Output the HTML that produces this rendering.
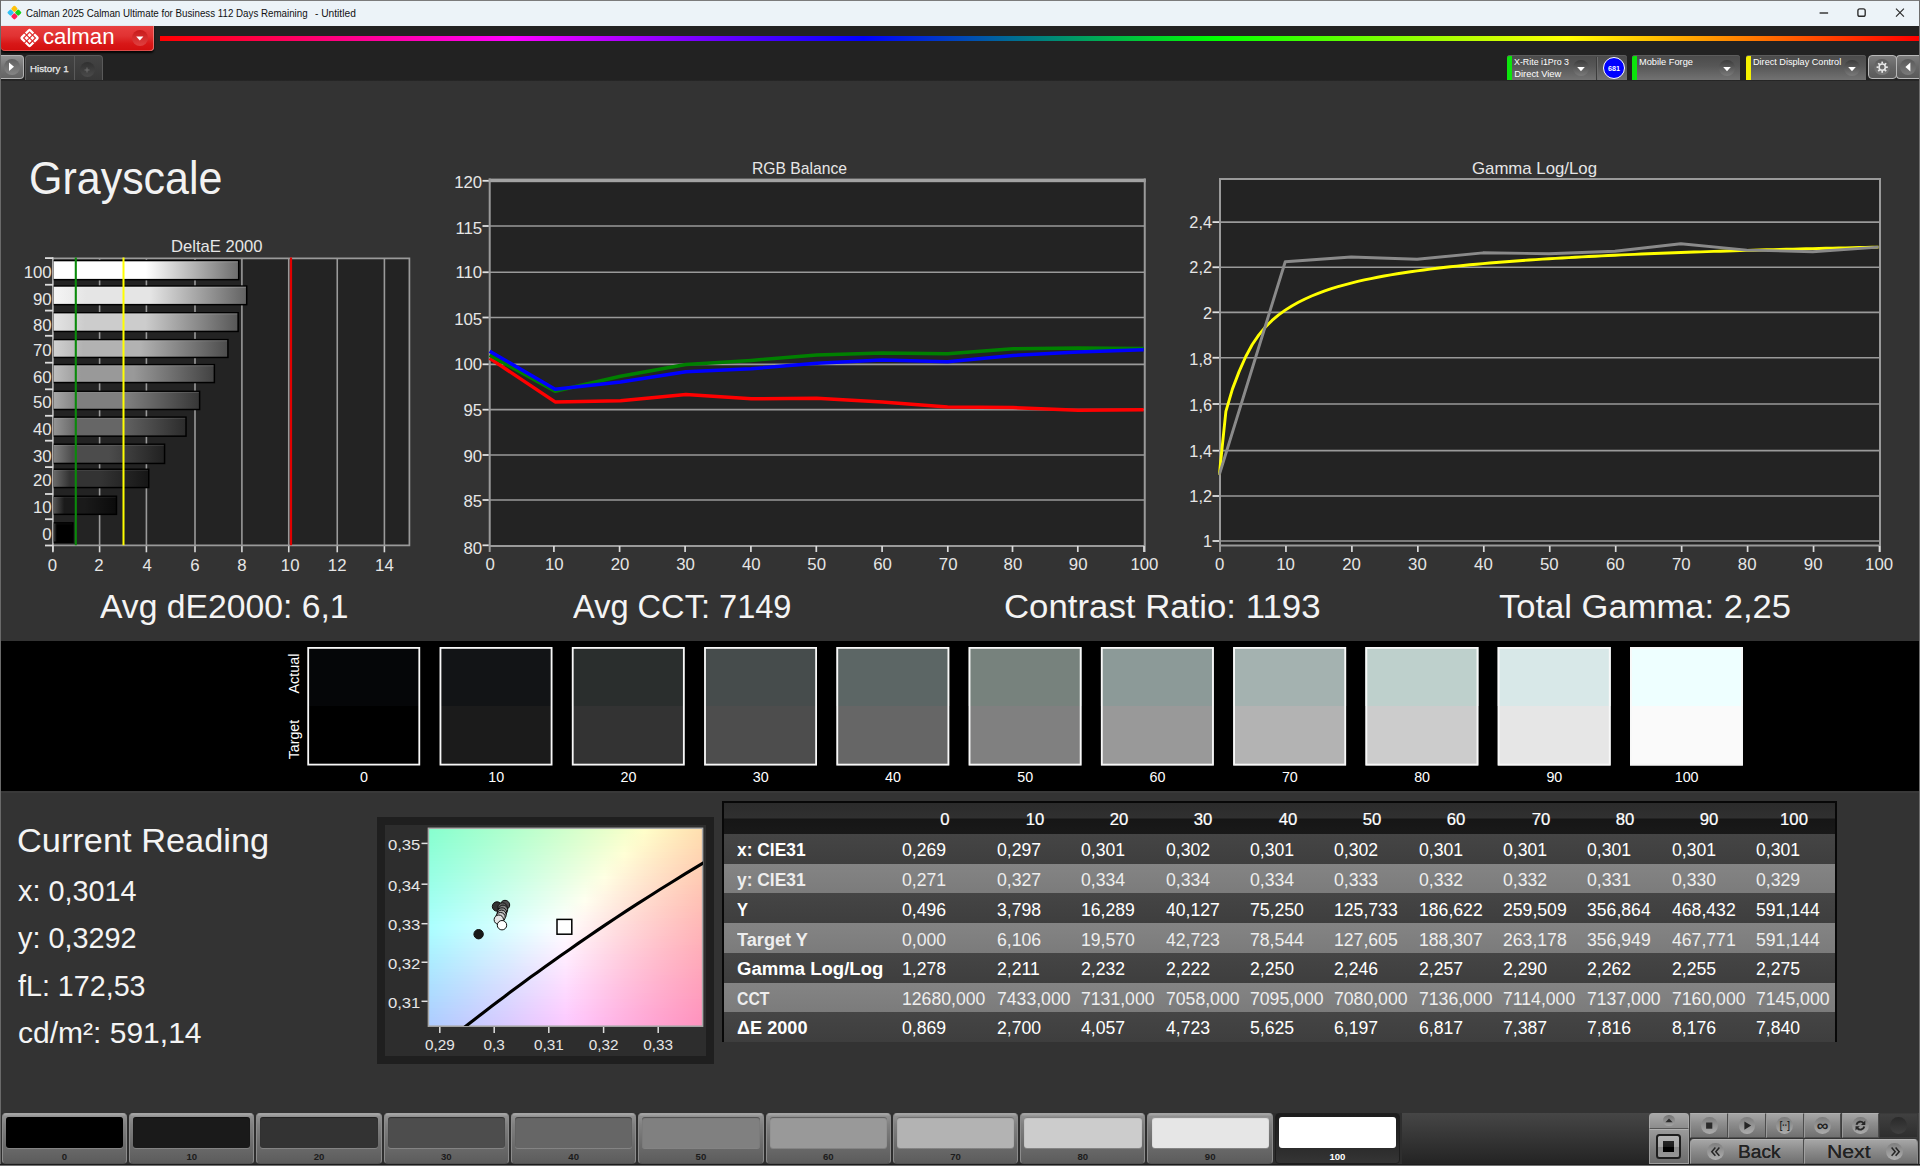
<!DOCTYPE html>
<html lang="en">
<head>
<meta charset="utf-8">
<title>Calman 2025 Calman Ultimate for Business 112 Days Remaining - Untitled</title>
<style>
*{box-sizing:border-box;margin:0;padding:0}
html,body{width:1920px;height:1166px;overflow:hidden;background:#333}
body{font-family:"Liberation Sans",sans-serif;color:#fff}
#app{position:relative;width:1920px;height:1166px;overflow:hidden;background:#333}
.a{position:absolute}
.t{position:absolute;white-space:nowrap}
svg{display:block;overflow:visible}
svg text{font-family:"Liberation Sans",sans-serif}
</style>
</head>
<body>
<div id="app">
<header id="chrome">
<div class="a" style="left:0;top:0;width:1920px;height:27px;background:#ecf3f8;border-top:1px solid #7b7b7b"></div>
<svg style="position:absolute;left:6px;top:4px" width="18" height="18" viewBox="6 4 18 18" ><g transform="translate(14.4 12.6) rotate(45)"><rect x="-5.2" y="-5.2" width="5" height="5" rx="1.2" fill="#ffc20a"/><rect x="0.2" y="-5.2" width="5" height="5" rx="1.2" fill="#19d219"/><rect x="-5.2" y="0.2" width="5" height="5" rx="1.2" fill="#2fc1f5"/><rect x="0.2" y="0.2" width="5" height="5" rx="1.2" fill="#ff1f5a"/></g></svg>
<div class="t " style="top:5.50px;font-size:11px;line-height:15px;color:#111;left:26.20px;transform-origin:0 50%;transform:scaleX(0.8863);">Calman 2025 Calman Ultimate for Business 112 Days Remaining</div>
<div class="t " style="top:5.50px;font-size:11px;line-height:15px;color:#111;left:314.60px;transform-origin:0 50%;transform:scaleX(0.9269);">- Untitled</div>
<svg style="position:absolute;left:1800px;top:1px" width="120" height="25" viewBox="1800 1 120 25" ><path d="M1819.6 13h8.5" stroke="#3a3a3a" stroke-width="1.5" fill="none"/><rect x="1857.9" y="8.8" width="7.3" height="7.5" rx="1.9" stroke="#2a2a2a" stroke-width="1.35" fill="none"/><path d="M1896 8.6l7.9 8M1903.9 8.6l-7.9 8" stroke="#2a2a2a" stroke-width="1.15" fill="none"/></svg>
<div class="a" style="left:0;top:26px;width:1920px;height:55px;background:linear-gradient(#222 0,#222 98.6%,#2b2b2b 100%)"></div>
<div class="a" style="left:160px;top:36.4px;width:1759px;height:4.2px;background:linear-gradient(90deg,#ff0000 0%,#ff00ff 20%,#0000ff 40%,#00ff00 60%,#ffff00 80%,#ff0000 100%)"></div>
<div class="a" style="left:1px;top:26px;width:153px;height:25px;border-radius:0 0 4px 4px;background:linear-gradient(#e84040,#e13232 40%,#d81818 70%,#d20e0e);box-shadow:0 1.5px 2px rgba(0,0,0,.85), inset 0 -1px 0 rgba(235,170,165,.4), inset -1px 0 0 rgba(255,200,190,.45)"></div>
<svg style="position:absolute;left:18px;top:26px" width="24" height="24" viewBox="18 26 24 24" ><g transform="translate(29.55 38) rotate(45)"><rect x="-5.9" y="-5.9" width="11.8" height="11.8" rx="0.8" fill="none" stroke="#fff" stroke-width="2.3"/><rect x="-3.55" y="-3.55" width="7.1" height="7.1" fill="#fff"/><path d="M0 -8V8M-8 0H8" stroke="#dd2626" stroke-width="1.05" fill="none"/><rect x="-4.2" y="-4.2" width="8.4" height="8.4" fill="none" stroke="#dd2626" stroke-width="0.0"/></g></svg>
<div class="t " style="top:21.60px;font-size:22px;line-height:29px;color:#fff;left:42.50px;transform-origin:0 50%;transform:scaleX(1.0082);">calman</div>
<div class="a" style="left:131.5px;top:29.5px;width:16.5px;height:16.5px;border-radius:50%;background:linear-gradient(#c81a1a,#e04040)"></div>
<svg style="position:absolute;left:132px;top:30px" width="16" height="16" viewBox="132 30 16 16" ><path d="M136.2 36.6h7.2l-3.6 4z" fill="#fff"/></svg>
<div class="a" style="left:0;top:55px;width:24px;height:24px;border-radius:0 4px 4px 0;background:linear-gradient(#929292,#747474 50%,#646464);border:1px solid #b4b4b4;border-left:0"></div>
<div class="a" style="left:4px;top:59px;width:16px;height:16px;border-radius:50%;background:linear-gradient(#606060,#858585)"></div>
<svg style="position:absolute;left:4px;top:59px" width="16" height="16" viewBox="4 59 16 16" ><path d="M9 62.6l5 4.2-5 4.2z" fill="#fff"/></svg>
<div class="a" style="left:25px;top:55px;width:50px;height:25px;border-radius:4px 0 0 0;background:linear-gradient(#444,#383838);border:1px solid #5a5a5a;border-bottom:0"></div>
<div class="a" style="left:74px;top:55px;width:29px;height:25px;border-radius:0 4px 0 0;background:linear-gradient(#444,#383838);border:1px solid #5a5a5a;border-bottom:0"></div>
<div class="t " style="top:62.00px;font-size:9.6px;line-height:13px;color:#e8e8e8;left:30.40px;transform-origin:0 50%;transform:scaleX(1.0191);-webkit-text-stroke:.25px #e8e8e8;">History 1</div>
<div class="a" style="left:80px;top:62px;width:15px;height:15px;border-radius:50%;background:linear-gradient(#303030,#4a4a4a)"></div>
<svg style="position:absolute;left:80px;top:62px" width="15" height="15" viewBox="80 62 15 15" ><path d="M84.5 70h5M87 67.5v5" stroke="#6e6e6e" stroke-width="1" fill="none"/></svg>
<div class="a" style="left:1507px;top:55px;width:120px;height:25px;border-radius:3px 3px 0 0;background:linear-gradient(#4a4a4a,#575757 45%,#727272);box-shadow:inset 0 1px 0 #5c5c5c"></div>
<div class="a" style="left:1507px;top:56px;width:5px;height:24px;border-radius:2px 0 0 0;background:#0ce40c"></div>
<div class="a" style="left:1572.5px;top:59.5px;width:16px;height:16px;border-radius:50%;background:linear-gradient(#3c3c3c,#7a7a7a)"></div>
<svg style="position:absolute;left:1572.5px;top:60px" width="16" height="16" viewBox="1572.5 60 16 16" ><path d="M1576.7 67h7.6l-3.8 4.2z" fill="#fff"/></svg>
<div class="t " style="top:56.10px;font-size:9.33px;line-height:13px;color:#fff;left:1514.30px;transform-origin:0 50%;transform:scaleX(0.9470);">X-Rite i1Pro 3</div>
<div class="t " style="top:67.70px;font-size:9.33px;line-height:13px;color:#fff;left:1514.30px;transform-origin:0 50%;">Direct View</div>
<div class="a" style="left:1596px;top:57px;width:1px;height:23px;background:#3c3c3c"></div>
<div class="a" style="left:1597px;top:57px;width:1px;height:23px;background:#6c6c6c"></div>
<div class="a" style="left:1602.5px;top:56.5px;width:22.5px;height:22.5px;border-radius:50%;background:#0000ff;border:1px solid #fff"></div>
<div class="t " style="top:62.60px;font-size:8px;line-height:11px;color:#fff;font-weight:700;left:1213.80px;width:800px;text-align:center;transform-origin:50% 50%;transform:scaleX(0.8990);">681</div>
<div class="a" style="left:1632px;top:55px;width:108px;height:25px;border-radius:3px 3px 0 0;background:linear-gradient(#4a4a4a,#575757 45%,#727272);box-shadow:inset 0 1px 0 #5c5c5c"></div>
<div class="a" style="left:1632px;top:56px;width:5px;height:24px;border-radius:2px 0 0 0;background:#0ce40c"></div>
<div class="a" style="left:1719.2px;top:59.5px;width:16px;height:16px;border-radius:50%;background:linear-gradient(#3c3c3c,#7a7a7a)"></div>
<svg style="position:absolute;left:1719.2px;top:60px" width="16" height="16" viewBox="1719.2 60 16 16" ><path d="M1723.4 67h7.6l-3.8 4.2z" fill="#fff"/></svg>
<div class="t " style="top:56.10px;font-size:9.33px;line-height:13px;color:#fff;left:1639.20px;transform-origin:0 50%;transform:scaleX(0.9917);">Mobile Forge</div>
<div class="a" style="left:1746px;top:55px;width:120px;height:25px;border-radius:3px 3px 0 0;background:linear-gradient(#4a4a4a,#575757 45%,#727272);box-shadow:inset 0 1px 0 #5c5c5c"></div>
<div class="a" style="left:1746px;top:56px;width:5px;height:24px;border-radius:2px 0 0 0;background:#f4f000"></div>
<div class="a" style="left:1844px;top:59.5px;width:16px;height:16px;border-radius:50%;background:linear-gradient(#3c3c3c,#7a7a7a)"></div>
<svg style="position:absolute;left:1844px;top:60px" width="16" height="16" viewBox="1844 60 16 16" ><path d="M1848.2 67h7.6l-3.8 4.2z" fill="#fff"/></svg>
<div class="t " style="top:56.10px;font-size:9.33px;line-height:13px;color:#fff;left:1753.00px;transform-origin:0 50%;transform:scaleX(0.9777);">Direct Display Control</div>
<div class="a" style="left:1868px;top:55px;width:29px;height:24px;border-radius:4px;background:linear-gradient(#7c7c7c,#666 50%,#5a5a5a);border:1px solid #b8b8b8"></div>
<div class="a" style="left:1896px;top:55px;width:24px;height:24px;border-radius:4px 0 0 4px;background:linear-gradient(#7c7c7c,#666 50%,#5a5a5a);border:1px solid #b8b8b8;border-right:0"></div>
<div class="a" style="left:1874px;top:59px;width:16px;height:16px;border-radius:50%;background:linear-gradient(#5a5a5a,#7a7a7a)"></div>
<div class="a" style="left:1900px;top:59px;width:16px;height:16px;border-radius:50%;background:linear-gradient(#5a5a5a,#7a7a7a)"></div>
<svg style="position:absolute;left:1874px;top:59px" width="16" height="16" viewBox="1874 59 16 16" ><g transform="translate(1882.2 67.2)" fill="none" stroke="#e8e8e8"><circle r="3.1" stroke-width="1.5"/><path d="M0 -3.6V-5.6" stroke-width="1.7" transform="rotate(0)"/><path d="M0 -3.6V-5.6" stroke-width="1.7" transform="rotate(45)"/><path d="M0 -3.6V-5.6" stroke-width="1.7" transform="rotate(90)"/><path d="M0 -3.6V-5.6" stroke-width="1.7" transform="rotate(135)"/><path d="M0 -3.6V-5.6" stroke-width="1.7" transform="rotate(180)"/><path d="M0 -3.6V-5.6" stroke-width="1.7" transform="rotate(225)"/><path d="M0 -3.6V-5.6" stroke-width="1.7" transform="rotate(270)"/><path d="M0 -3.6V-5.6" stroke-width="1.7" transform="rotate(315)"/></g></svg>
<svg style="position:absolute;left:1900px;top:59px" width="16" height="16" viewBox="1900 59 16 16" ><path d="M1910.4 62.6l-5 4.4 5 4.4z" fill="#fff"/></svg>
</header>
<main id="grayscale-page">
<section id="charts">
<div class="a" style="left:0;top:81px;width:1920px;height:560px;background:#333"></div>
<div class="t " style="top:147.50px;font-size:46.6px;line-height:61px;color:#f2f2f2;left:28.60px;transform-origin:0 50%;transform:scaleX(0.9224);">Grayscale</div>
<svg style="position:absolute;left:0px;top:230px" width="430" height="350" viewBox="0 230 430 350" ><defs><linearGradient id="bg0" x1="0" x2="1" y1="0" y2="0"><stop offset="0" stop-color="rgb(62,62,62)"/><stop offset=".17" stop-color="rgb(0,0,0)"/><stop offset=".50" stop-color="rgb(0,0,0)"/><stop offset="1" stop-color="rgb(0,0,0)"/></linearGradient><linearGradient id="bg10" x1="0" x2="1" y1="0" y2="0"><stop offset="0" stop-color="rgb(84,84,84)"/><stop offset=".17" stop-color="rgb(26,26,26)"/><stop offset=".50" stop-color="rgb(26,26,26)"/><stop offset="1" stop-color="rgb(11,11,11)"/></linearGradient><linearGradient id="bg20" x1="0" x2="1" y1="0" y2="0"><stop offset="0" stop-color="rgb(105,105,105)"/><stop offset=".17" stop-color="rgb(51,51,51)"/><stop offset=".50" stop-color="rgb(51,51,51)"/><stop offset="1" stop-color="rgb(22,22,22)"/></linearGradient><linearGradient id="bg30" x1="0" x2="1" y1="0" y2="0"><stop offset="0" stop-color="rgb(127,127,127)"/><stop offset=".17" stop-color="rgb(76,76,76)"/><stop offset=".50" stop-color="rgb(76,76,76)"/><stop offset="1" stop-color="rgb(33,33,33)"/></linearGradient><linearGradient id="bg40" x1="0" x2="1" y1="0" y2="0"><stop offset="0" stop-color="rgb(148,148,148)"/><stop offset=".17" stop-color="rgb(102,102,102)"/><stop offset=".50" stop-color="rgb(102,102,102)"/><stop offset="1" stop-color="rgb(44,44,44)"/></linearGradient><linearGradient id="bg50" x1="0" x2="1" y1="0" y2="0"><stop offset="0" stop-color="rgb(168,168,168)"/><stop offset=".17" stop-color="rgb(127,127,127)"/><stop offset=".50" stop-color="rgb(127,127,127)"/><stop offset="1" stop-color="rgb(55,55,55)"/></linearGradient><linearGradient id="bg60" x1="0" x2="1" y1="0" y2="0"><stop offset="0" stop-color="rgb(189,189,189)"/><stop offset=".17" stop-color="rgb(153,153,153)"/><stop offset=".50" stop-color="rgb(153,153,153)"/><stop offset="1" stop-color="rgb(66,66,66)"/></linearGradient><linearGradient id="bg70" x1="0" x2="1" y1="0" y2="0"><stop offset="0" stop-color="rgb(209,209,209)"/><stop offset=".17" stop-color="rgb(178,178,178)"/><stop offset=".50" stop-color="rgb(178,178,178)"/><stop offset="1" stop-color="rgb(77,77,77)"/></linearGradient><linearGradient id="bg80" x1="0" x2="1" y1="0" y2="0"><stop offset="0" stop-color="rgb(228,228,228)"/><stop offset=".17" stop-color="rgb(204,204,204)"/><stop offset=".50" stop-color="rgb(204,204,204)"/><stop offset="1" stop-color="rgb(88,88,88)"/></linearGradient><linearGradient id="bg90" x1="0" x2="1" y1="0" y2="0"><stop offset="0" stop-color="rgb(245,245,245)"/><stop offset=".17" stop-color="rgb(229,229,229)"/><stop offset=".50" stop-color="rgb(229,229,229)"/><stop offset="1" stop-color="rgb(99,99,99)"/></linearGradient><linearGradient id="bg100" x1="0" x2="1" y1="0" y2="0"><stop offset="0" stop-color="rgb(255,255,255)"/><stop offset=".17" stop-color="rgb(255,255,255)"/><stop offset=".50" stop-color="rgb(255,255,255)"/><stop offset="1" stop-color="rgb(110,110,110)"/></linearGradient></defs><rect x="52.9" y="258.3" width="356.5" height="286.99999999999994" fill="#232323"/><path d="M99.6 258.3V545.3" stroke="#9a9a9a" stroke-width="1.6" fill="none"/><path d="M99.6 545.3V552.3" stroke="#d8d8d8" stroke-width="1.6" fill="none"/><path d="M146.4 258.3V545.3" stroke="#9a9a9a" stroke-width="1.6" fill="none"/><path d="M146.4 545.3V552.3" stroke="#d8d8d8" stroke-width="1.6" fill="none"/><path d="M195.0 258.3V545.3" stroke="#9a9a9a" stroke-width="1.6" fill="none"/><path d="M195.0 545.3V552.3" stroke="#d8d8d8" stroke-width="1.6" fill="none"/><path d="M241.9 258.3V545.3" stroke="#9a9a9a" stroke-width="1.6" fill="none"/><path d="M241.9 545.3V552.3" stroke="#d8d8d8" stroke-width="1.6" fill="none"/><path d="M288.75 258.3V545.3" stroke="#9a9a9a" stroke-width="1.6" fill="none"/><path d="M288.75 545.3V552.3" stroke="#d8d8d8" stroke-width="1.6" fill="none"/><path d="M337.25 258.3V545.3" stroke="#9a9a9a" stroke-width="1.6" fill="none"/><path d="M337.25 545.3V552.3" stroke="#d8d8d8" stroke-width="1.6" fill="none"/><path d="M384.4 258.3V545.3" stroke="#9a9a9a" stroke-width="1.6" fill="none"/><path d="M384.4 545.3V552.3" stroke="#d8d8d8" stroke-width="1.6" fill="none"/><path d="M52.9 258.3H409.4V545.3H52.9" stroke="#9a9a9a" stroke-width="1.7" fill="none"/><path d="M52.9 257.3V551.3" stroke="#b4b4b4" stroke-width="1.7" fill="none"/><rect x="53.70" y="259.90" width="185.74" height="20.50" fill="#000"/><rect x="53.70" y="261.40" width="184.24" height="17.50" fill="url(#bg100)"/><rect x="53.70" y="261.20" width="184.24" height="1" fill="#fff" fill-opacity="0.30"/><rect x="53.70" y="285.30" width="193.73" height="20.10" fill="#000"/><rect x="53.70" y="286.80" width="192.23" height="17.10" fill="url(#bg90)"/><rect x="53.70" y="286.60" width="192.23" height="1" fill="#fff" fill-opacity="0.27"/><rect x="53.70" y="312.00" width="185.16" height="20.20" fill="#000"/><rect x="53.70" y="313.50" width="183.66" height="17.20" fill="url(#bg80)"/><rect x="53.70" y="313.30" width="183.66" height="1" fill="#fff" fill-opacity="0.25"/><rect x="53.70" y="338.90" width="174.96" height="19.30" fill="#000"/><rect x="53.70" y="340.40" width="173.46" height="16.30" fill="url(#bg70)"/><rect x="53.70" y="340.20" width="173.46" height="1" fill="#fff" fill-opacity="0.22"/><rect x="53.70" y="363.90" width="161.41" height="19.40" fill="#000"/><rect x="53.70" y="365.40" width="159.91" height="16.40" fill="url(#bg60)"/><rect x="53.70" y="365.20" width="159.91" height="1" fill="#fff" fill-opacity="0.20"/><rect x="53.70" y="390.60" width="146.66" height="19.65" fill="#000"/><rect x="53.70" y="392.10" width="145.16" height="16.65" fill="url(#bg50)"/><rect x="53.70" y="391.90" width="145.16" height="1" fill="#fff" fill-opacity="0.17"/><rect x="53.70" y="416.40" width="133.06" height="20.50" fill="#000"/><rect x="53.70" y="417.90" width="131.56" height="17.50" fill="url(#bg40)"/><rect x="53.70" y="417.70" width="131.56" height="1" fill="#fff" fill-opacity="0.14"/><rect x="53.70" y="443.50" width="111.61" height="20.70" fill="#000"/><rect x="53.70" y="445.00" width="110.11" height="17.70" fill="url(#bg30)"/><rect x="53.70" y="444.80" width="110.11" height="1" fill="#fff" fill-opacity="0.12"/><rect x="53.70" y="468.50" width="95.78" height="19.80" fill="#000"/><rect x="53.70" y="470.00" width="94.28" height="16.80" fill="url(#bg20)"/><rect x="53.70" y="469.80" width="94.28" height="1" fill="#fff" fill-opacity="0.09"/><rect x="53.70" y="495.50" width="63.51" height="19.60" fill="#000"/><rect x="53.70" y="497.00" width="62.01" height="16.60" fill="url(#bg10)"/><rect x="53.70" y="496.80" width="62.01" height="1" fill="#fff" fill-opacity="0.07"/><rect x="53.70" y="522.10" width="19.96" height="20.90" fill="#000"/><rect x="53.70" y="523.60" width="18.46" height="17.90" fill="url(#bg0)"/><rect x="53.70" y="523.40" width="18.46" height="1" fill="#fff" fill-opacity="0.04"/><path d="M45 258.10H52.9" stroke="#dcdcdc" stroke-width="1.8" fill="none"/><path d="M45 284.75H52.9" stroke="#dcdcdc" stroke-width="1.8" fill="none"/><path d="M45 310.60H52.9" stroke="#dcdcdc" stroke-width="1.8" fill="none"/><path d="M45 335.80H52.9" stroke="#dcdcdc" stroke-width="1.8" fill="none"/><path d="M45 362.70H52.9" stroke="#dcdcdc" stroke-width="1.8" fill="none"/><path d="M45 389.30H52.9" stroke="#dcdcdc" stroke-width="1.8" fill="none"/><path d="M45 415.80H52.9" stroke="#dcdcdc" stroke-width="1.8" fill="none"/><path d="M45 440.70H52.9" stroke="#dcdcdc" stroke-width="1.8" fill="none"/><path d="M45 467.10H52.9" stroke="#dcdcdc" stroke-width="1.8" fill="none"/><path d="M45 494.00H52.9" stroke="#dcdcdc" stroke-width="1.8" fill="none"/><path d="M45 519.20H52.9" stroke="#dcdcdc" stroke-width="1.8" fill="none"/><path d="M45 545.50H52.9" stroke="#dcdcdc" stroke-width="1.8" fill="none"/><text x="51.70" y="278.40" font-size="16.8" fill="#e6e6e6" text-anchor="end">100</text><text x="51.70" y="305.05" font-size="16.8" fill="#e6e6e6" text-anchor="end">90</text><text x="51.70" y="330.50" font-size="16.8" fill="#e6e6e6" text-anchor="end">80</text><text x="51.70" y="356.30" font-size="16.8" fill="#e6e6e6" text-anchor="end">70</text><text x="51.70" y="382.80" font-size="16.8" fill="#e6e6e6" text-anchor="end">60</text><text x="51.70" y="408.00" font-size="16.8" fill="#e6e6e6" text-anchor="end">50</text><text x="51.70" y="434.90" font-size="16.8" fill="#e6e6e6" text-anchor="end">40</text><text x="51.70" y="462.00" font-size="16.8" fill="#e6e6e6" text-anchor="end">30</text><text x="51.70" y="486.10" font-size="16.8" fill="#e6e6e6" text-anchor="end">20</text><text x="51.70" y="513.05" font-size="16.8" fill="#e6e6e6" text-anchor="end">10</text><text x="51.70" y="539.70" font-size="16.8" fill="#e6e6e6" text-anchor="end">0</text><path d="M75.8 257.5V545.3" stroke="#0a8a0a" stroke-width="2.1" fill="none"/><path d="M123.5 257.5V545.3" stroke="#ffff00" stroke-width="2.0" fill="none"/><path d="M291.0 257.5V545.3" stroke="#e00000" stroke-width="2.2" fill="none"/><path d="M52.9 545.3V552.3" stroke="#dcdcdc" stroke-width="1.6" fill="none"/><text x="52.30" y="571.10" font-size="16.8" fill="#e6e6e6" text-anchor="middle">0</text><text x="98.90" y="571.10" font-size="16.8" fill="#e6e6e6" text-anchor="middle">2</text><text x="147.20" y="571.10" font-size="16.8" fill="#e6e6e6" text-anchor="middle">4</text><text x="195.00" y="571.10" font-size="16.8" fill="#e6e6e6" text-anchor="middle">6</text><text x="241.90" y="571.10" font-size="16.8" fill="#e6e6e6" text-anchor="middle">8</text><text x="290.20" y="571.10" font-size="16.8" fill="#e6e6e6" text-anchor="middle">10</text><text x="337.20" y="571.10" font-size="16.8" fill="#e6e6e6" text-anchor="middle">12</text><text x="384.40" y="571.10" font-size="16.8" fill="#e6e6e6" text-anchor="middle">14</text><text x="216.80" y="252.00" font-size="16.6" fill="#e6e6e6" text-anchor="middle" textLength="91.50" lengthAdjust="spacingAndGlyphs">DeltaE 2000</text></svg>
<svg style="position:absolute;left:430px;top:150px" width="740" height="430" viewBox="430 150 740 430" ><rect x="489.7" y="179" width="655.05" height="367" fill="#232323"/><path d="M489.7 226.0H1144.75" stroke="#9a9a9a" stroke-width="1.7" fill="none"/><path d="M489.7 272.25H1144.75" stroke="#9a9a9a" stroke-width="1.7" fill="none"/><path d="M489.7 317.5H1144.75" stroke="#9a9a9a" stroke-width="1.7" fill="none"/><path d="M489.7 364.3H1144.75" stroke="#9a9a9a" stroke-width="1.7" fill="none"/><path d="M489.7 409.7H1144.75" stroke="#9a9a9a" stroke-width="1.7" fill="none"/><path d="M489.7 455.0H1144.75" stroke="#9a9a9a" stroke-width="1.7" fill="none"/><path d="M489.7 500.0H1144.75" stroke="#9a9a9a" stroke-width="1.7" fill="none"/><rect x="488.7" y="178.6" width="657.05" height="3.6" fill="#a2a2a2"/><path d="M489.7 178.6V552M1144.75 178.6V552M489.7 545.9H1145.75" stroke="#9a9a9a" stroke-width="2" fill="none"/><clipPath id="rgbclip"><rect x="488.5" y="182" width="655.4499999999999" height="363"/></clipPath><g clip-path="url(#rgbclip)"><path d="M489.70 358.30L555.11 401.90L620.51 400.80L685.91 394.60L751.32 398.75L816.72 398.30L882.13 402.10L947.53 407.10L1012.94 407.50L1078.35 410.25L1143.75 409.80" stroke="#ff0000" stroke-width="3.5" fill="none" stroke-linejoin="round"/><path d="M489.70 355.30L555.11 391.20L620.51 376.25L685.91 364.50L751.32 360.40L816.72 355.00L882.13 352.90L947.53 353.75L1012.94 348.75L1078.35 347.90L1143.75 348.60" stroke="#008000" stroke-width="3.5" fill="none" stroke-linejoin="round"/><path d="M489.70 351.25L555.11 389.20L620.51 382.10L685.91 371.70L751.32 368.75L816.72 363.30L882.13 360.00L947.53 361.80L1012.94 355.40L1078.35 352.10L1143.75 349.80" stroke="#0000ff" stroke-width="3.5" fill="none" stroke-linejoin="round"/></g><path d="M482.5 180.8H488.7" stroke="#e0e0e0" stroke-width="1.8" fill="none"/><text x="482.20" y="187.90" font-size="16.8" fill="#e6e6e6" text-anchor="end">120</text><path d="M482.5 226.0H488.7" stroke="#e0e0e0" stroke-width="1.8" fill="none"/><text x="482.20" y="233.50" font-size="16.8" fill="#e6e6e6" text-anchor="end">115</text><path d="M482.5 272.25H488.7" stroke="#e0e0e0" stroke-width="1.8" fill="none"/><text x="482.20" y="278.40" font-size="16.8" fill="#e6e6e6" text-anchor="end">110</text><path d="M482.5 317.5H488.7" stroke="#e0e0e0" stroke-width="1.8" fill="none"/><text x="482.20" y="325.20" font-size="16.8" fill="#e6e6e6" text-anchor="end">105</text><path d="M482.5 364.3H488.7" stroke="#e0e0e0" stroke-width="1.8" fill="none"/><text x="482.20" y="370.45" font-size="16.8" fill="#e6e6e6" text-anchor="end">100</text><path d="M482.5 409.7H488.7" stroke="#e0e0e0" stroke-width="1.8" fill="none"/><text x="482.20" y="416.00" font-size="16.8" fill="#e6e6e6" text-anchor="end">95</text><path d="M482.5 455.0H488.7" stroke="#e0e0e0" stroke-width="1.8" fill="none"/><text x="482.20" y="462.00" font-size="16.8" fill="#e6e6e6" text-anchor="end">90</text><path d="M482.5 500.0H488.7" stroke="#e0e0e0" stroke-width="1.8" fill="none"/><text x="482.20" y="507.20" font-size="16.8" fill="#e6e6e6" text-anchor="end">85</text><path d="M482.5 545.3H488.7" stroke="#e0e0e0" stroke-width="1.8" fill="none"/><text x="482.20" y="554.05" font-size="16.8" fill="#e6e6e6" text-anchor="end">80</text><text x="490.20" y="569.80" font-size="16.8" fill="#e6e6e6" text-anchor="middle">0</text><path d="M553.90 546V552" stroke="#dcdcdc" stroke-width="1.7" fill="none"/><text x="554.30" y="569.80" font-size="16.8" fill="#e6e6e6" text-anchor="middle">10</text><path d="M619.60 546V552" stroke="#dcdcdc" stroke-width="1.7" fill="none"/><text x="620.00" y="569.80" font-size="16.8" fill="#e6e6e6" text-anchor="middle">20</text><path d="M685.10 546V552" stroke="#dcdcdc" stroke-width="1.7" fill="none"/><text x="685.50" y="569.80" font-size="16.8" fill="#e6e6e6" text-anchor="middle">30</text><path d="M750.90 546V552" stroke="#dcdcdc" stroke-width="1.7" fill="none"/><text x="751.30" y="569.80" font-size="16.8" fill="#e6e6e6" text-anchor="middle">40</text><path d="M816.30 546V552" stroke="#dcdcdc" stroke-width="1.7" fill="none"/><text x="816.70" y="569.80" font-size="16.8" fill="#e6e6e6" text-anchor="middle">50</text><path d="M882.10 546V552" stroke="#dcdcdc" stroke-width="1.7" fill="none"/><text x="882.50" y="569.80" font-size="16.8" fill="#e6e6e6" text-anchor="middle">60</text><path d="M947.80 546V552" stroke="#dcdcdc" stroke-width="1.7" fill="none"/><text x="948.20" y="569.80" font-size="16.8" fill="#e6e6e6" text-anchor="middle">70</text><path d="M1012.50 546V552" stroke="#dcdcdc" stroke-width="1.7" fill="none"/><text x="1012.90" y="569.80" font-size="16.8" fill="#e6e6e6" text-anchor="middle">80</text><path d="M1077.80 546V552" stroke="#dcdcdc" stroke-width="1.7" fill="none"/><text x="1078.20" y="569.80" font-size="16.8" fill="#e6e6e6" text-anchor="middle">90</text><path d="M1144.00 546V552" stroke="#dcdcdc" stroke-width="1.7" fill="none"/><text x="1144.40" y="569.80" font-size="16.8" fill="#e6e6e6" text-anchor="middle">100</text><text x="799.50" y="173.50" font-size="16.6" fill="#e6e6e6" text-anchor="middle" textLength="95.00" lengthAdjust="spacingAndGlyphs">RGB Balance</text></svg>
<svg style="position:absolute;left:1160px;top:150px" width="760" height="430" viewBox="1160 150 760 430" ><rect x="1220" y="179" width="660" height="367" fill="#232323"/><path d="M1220 222.1H1880" stroke="#9a9a9a" stroke-width="1.7" fill="none"/><path d="M1220 267.25H1880" stroke="#9a9a9a" stroke-width="1.7" fill="none"/><path d="M1220 312.3H1880" stroke="#9a9a9a" stroke-width="1.7" fill="none"/><path d="M1220 357.75H1880" stroke="#9a9a9a" stroke-width="1.7" fill="none"/><path d="M1220 404.0H1880" stroke="#9a9a9a" stroke-width="1.7" fill="none"/><path d="M1220 450.7H1880" stroke="#9a9a9a" stroke-width="1.7" fill="none"/><path d="M1220 496.0H1880" stroke="#9a9a9a" stroke-width="1.7" fill="none"/><path d="M1220 541.0H1880" stroke="#9a9a9a" stroke-width="1.7" fill="none"/><path d="M1220 179H1880V552M1220 178V552M1219 545.4H1881" stroke="#9a9a9a" stroke-width="2" fill="none"/><clipPath id="gamclip"><rect x="1218.1" y="180" width="660.6999999999999" height="365"/></clipPath><g clip-path="url(#gamclip)"><path d="M1219.30 474.73L1225.89 411.35L1232.49 388.87L1239.08 371.61L1245.67 356.72L1252.26 344.49L1258.86 334.86L1265.45 327.02L1272.04 320.48L1278.64 314.92L1285.23 310.13L1291.82 305.94L1298.42 302.24L1305.01 298.95L1311.60 296.00L1318.19 293.34L1324.79 290.91L1331.38 288.70L1337.97 286.67L1344.57 284.79L1351.16 283.06L1357.75 281.45L1364.35 279.95L1370.94 278.55L1377.53 277.24L1384.12 276.01L1390.72 274.85L1397.31 273.76L1403.90 272.73L1410.50 271.75L1417.09 270.82L1423.68 269.94L1430.28 269.10L1436.87 268.30L1443.46 267.54L1450.05 266.81L1456.65 266.11L1463.24 265.45L1469.83 264.81L1476.43 264.19L1483.02 263.60L1489.61 263.04L1496.21 262.49L1502.80 261.96L1509.39 261.46L1515.98 260.97L1522.58 260.49L1529.17 260.04L1535.76 259.59L1542.36 259.17L1548.95 258.75L1555.54 258.35L1562.14 257.96L1568.73 257.58L1575.32 257.22L1581.91 256.86L1588.51 256.52L1595.10 256.18L1601.69 255.85L1608.29 255.54L1614.88 255.23L1621.47 254.92L1628.07 254.63L1634.66 254.34L1641.25 254.06L1647.85 253.79L1654.44 253.53L1661.03 253.27L1667.62 253.01L1674.22 252.77L1680.81 252.52L1687.40 252.29L1694.00 252.06L1700.59 251.83L1707.18 251.61L1713.78 251.39L1720.37 251.18L1726.96 250.97L1733.55 250.77L1740.15 250.57L1746.74 250.38L1753.33 250.18L1759.93 250.00L1766.52 249.81L1773.11 249.63L1779.70 249.45L1786.30 249.28L1792.89 249.11L1799.48 248.94L1806.08 248.78L1812.67 248.62L1819.26 248.46L1825.86 248.30L1832.45 248.15L1839.04 248.00L1845.63 247.85L1852.23 247.70L1858.82 247.56L1865.41 247.42L1872.01 247.28L1878.60 247.14" stroke="#ffff00" stroke-width="2.9" fill="none" stroke-linejoin="round"/><path d="M1219.30 474.73L1285.23 261.73L1351.16 256.93L1417.09 259.22L1483.02 252.82L1548.95 253.74L1614.88 251.23L1680.81 243.69L1746.74 250.09L1812.67 251.68L1878.60 247.12" stroke="#8a8a8a" stroke-width="2.9" fill="none" stroke-linejoin="round"/></g><path d="M1212.5 222.1H1219" stroke="#e0e0e0" stroke-width="1.8" fill="none"/><text x="1212.00" y="228.20" font-size="16.8" fill="#e6e6e6" text-anchor="end" textLength="22.65" lengthAdjust="spacingAndGlyphs">2,4</text><path d="M1212.5 267.25H1219" stroke="#e0e0e0" stroke-width="1.8" fill="none"/><text x="1212.00" y="273.40" font-size="16.8" fill="#e6e6e6" text-anchor="end" textLength="22.65" lengthAdjust="spacingAndGlyphs">2,2</text><path d="M1212.5 312.3H1219" stroke="#e0e0e0" stroke-width="1.8" fill="none"/><text x="1212.00" y="319.40" font-size="16.8" fill="#e6e6e6" text-anchor="end" textLength="9.06" lengthAdjust="spacingAndGlyphs">2</text><path d="M1212.5 357.75H1219" stroke="#e0e0e0" stroke-width="1.8" fill="none"/><text x="1212.00" y="364.80" font-size="16.8" fill="#e6e6e6" text-anchor="end" textLength="22.65" lengthAdjust="spacingAndGlyphs">1,8</text><path d="M1212.5 404.0H1219" stroke="#e0e0e0" stroke-width="1.8" fill="none"/><text x="1212.00" y="411.45" font-size="16.8" fill="#e6e6e6" text-anchor="end" textLength="22.65" lengthAdjust="spacingAndGlyphs">1,6</text><path d="M1212.5 450.7H1219" stroke="#e0e0e0" stroke-width="1.8" fill="none"/><text x="1212.00" y="456.70" font-size="16.8" fill="#e6e6e6" text-anchor="end" textLength="22.65" lengthAdjust="spacingAndGlyphs">1,4</text><path d="M1212.5 496.0H1219" stroke="#e0e0e0" stroke-width="1.8" fill="none"/><text x="1212.00" y="502.00" font-size="16.8" fill="#e6e6e6" text-anchor="end" textLength="22.65" lengthAdjust="spacingAndGlyphs">1,2</text><path d="M1212.5 541.0H1219" stroke="#e0e0e0" stroke-width="1.8" fill="none"/><text x="1212.00" y="546.90" font-size="16.8" fill="#e6e6e6" text-anchor="end" textLength="9.06" lengthAdjust="spacingAndGlyphs">1</text><text x="1219.60" y="569.80" font-size="16.8" fill="#e6e6e6" text-anchor="middle">0</text><path d="M1285.95 546V552" stroke="#dcdcdc" stroke-width="1.7" fill="none"/><text x="1285.55" y="569.80" font-size="16.8" fill="#e6e6e6" text-anchor="middle">10</text><path d="M1351.90 546V552" stroke="#dcdcdc" stroke-width="1.7" fill="none"/><text x="1351.50" y="569.80" font-size="16.8" fill="#e6e6e6" text-anchor="middle">20</text><path d="M1417.85 546V552" stroke="#dcdcdc" stroke-width="1.7" fill="none"/><text x="1417.45" y="569.80" font-size="16.8" fill="#e6e6e6" text-anchor="middle">30</text><path d="M1483.80 546V552" stroke="#dcdcdc" stroke-width="1.7" fill="none"/><text x="1483.40" y="569.80" font-size="16.8" fill="#e6e6e6" text-anchor="middle">40</text><path d="M1549.75 546V552" stroke="#dcdcdc" stroke-width="1.7" fill="none"/><text x="1549.35" y="569.80" font-size="16.8" fill="#e6e6e6" text-anchor="middle">50</text><path d="M1615.70 546V552" stroke="#dcdcdc" stroke-width="1.7" fill="none"/><text x="1615.30" y="569.80" font-size="16.8" fill="#e6e6e6" text-anchor="middle">60</text><path d="M1681.65 546V552" stroke="#dcdcdc" stroke-width="1.7" fill="none"/><text x="1681.25" y="569.80" font-size="16.8" fill="#e6e6e6" text-anchor="middle">70</text><path d="M1747.60 546V552" stroke="#dcdcdc" stroke-width="1.7" fill="none"/><text x="1747.20" y="569.80" font-size="16.8" fill="#e6e6e6" text-anchor="middle">80</text><path d="M1813.55 546V552" stroke="#dcdcdc" stroke-width="1.7" fill="none"/><text x="1813.15" y="569.80" font-size="16.8" fill="#e6e6e6" text-anchor="middle">90</text><path d="M1879.50 546V552" stroke="#dcdcdc" stroke-width="1.7" fill="none"/><text x="1879.10" y="569.80" font-size="16.8" fill="#e6e6e6" text-anchor="middle">100</text><text x="1534.50" y="173.50" font-size="16.6" fill="#e6e6e6" text-anchor="middle" textLength="125.00" lengthAdjust="spacingAndGlyphs">Gamma Log/Log</text></svg>
<div class="t " style="top:584.00px;font-size:33.8px;line-height:44px;color:#f4f4f4;left:100.00px;transform-origin:0 50%;transform:scaleX(0.9967);">Avg dE2000: 6,1</div>
<div class="t " style="top:584.00px;font-size:33.8px;line-height:44px;color:#f4f4f4;left:573.00px;transform-origin:0 50%;transform:scaleX(0.9638);">Avg CCT: 7149</div>
<div class="t " style="top:584.00px;font-size:33.8px;line-height:44px;color:#f4f4f4;left:1004.00px;transform-origin:0 50%;transform:scaleX(1.0293);">Contrast Ratio: 1193</div>
<div class="t " style="top:584.00px;font-size:33.8px;line-height:44px;color:#f4f4f4;left:1498.50px;transform-origin:0 50%;transform:scaleX(1.0226);">Total Gamma: 2,25</div>
</section>
<section id="swatches">
<div class="a" style="left:0;top:641px;width:1920px;height:150.4px;background:#000"></div>
<div class="a" style="left:0;top:791.4px;width:1920px;height:1.4px;background:#393939"></div>
<svg style="position:absolute;left:280px;top:641px" width="1500" height="150" viewBox="280 641 1500 150" ><rect x="307.30" y="647.0" width="112.9" height="118.50" fill="#000000"/><rect x="307.30" y="647.0" width="112.9" height="59.00" fill="#050608"/><rect x="308.20" y="647.9" width="111.10000000000001" height="116.70" fill="none" stroke="#f8f8f8" stroke-width="1.8"/><text x="363.95" y="781.80" font-size="14.3" fill="#fff" text-anchor="middle">0</text><rect x="439.57" y="647.0" width="112.9" height="118.50" fill="#1b1b1b"/><rect x="439.57" y="647.0" width="112.9" height="59.00" fill="#121416"/><rect x="440.47" y="647.9" width="111.10000000000001" height="116.70" fill="none" stroke="#f8f8f8" stroke-width="1.8"/><text x="496.22" y="781.80" font-size="14.3" fill="#fff" text-anchor="middle">10</text><rect x="571.84" y="647.0" width="112.9" height="118.50" fill="#333333"/><rect x="571.84" y="647.0" width="112.9" height="59.00" fill="#2a2e2d"/><rect x="572.74" y="647.9" width="111.10000000000001" height="116.70" fill="none" stroke="#f8f8f8" stroke-width="1.8"/><text x="628.49" y="781.80" font-size="14.3" fill="#fff" text-anchor="middle">20</text><rect x="704.11" y="647.0" width="112.9" height="118.50" fill="#4d4d4d"/><rect x="704.11" y="647.0" width="112.9" height="59.00" fill="#464c4c"/><rect x="705.01" y="647.9" width="111.10000000000001" height="116.70" fill="none" stroke="#f8f8f8" stroke-width="1.8"/><text x="760.76" y="781.80" font-size="14.3" fill="#fff" text-anchor="middle">30</text><rect x="836.38" y="647.0" width="112.9" height="118.50" fill="#666666"/><rect x="836.38" y="647.0" width="112.9" height="59.00" fill="#5c6665"/><rect x="837.28" y="647.9" width="111.10000000000001" height="116.70" fill="none" stroke="#f8f8f8" stroke-width="1.8"/><text x="893.03" y="781.80" font-size="14.3" fill="#fff" text-anchor="middle">40</text><rect x="968.65" y="647.0" width="112.9" height="118.50" fill="#808080"/><rect x="968.65" y="647.0" width="112.9" height="59.00" fill="#77827d"/><rect x="969.55" y="647.9" width="111.10000000000001" height="116.70" fill="none" stroke="#f8f8f8" stroke-width="1.8"/><text x="1025.30" y="781.80" font-size="14.3" fill="#fff" text-anchor="middle">50</text><rect x="1100.92" y="647.0" width="112.9" height="118.50" fill="#999999"/><rect x="1100.92" y="647.0" width="112.9" height="59.00" fill="#8c9a98"/><rect x="1101.82" y="647.9" width="111.10000000000001" height="116.70" fill="none" stroke="#f8f8f8" stroke-width="1.8"/><text x="1157.57" y="781.80" font-size="14.3" fill="#fff" text-anchor="middle">60</text><rect x="1233.19" y="647.0" width="112.9" height="118.50" fill="#b3b3b3"/><rect x="1233.19" y="647.0" width="112.9" height="59.00" fill="#a4b2b0"/><rect x="1234.09" y="647.9" width="111.10000000000001" height="116.70" fill="none" stroke="#f8f8f8" stroke-width="1.8"/><text x="1289.84" y="781.80" font-size="14.3" fill="#fff" text-anchor="middle">70</text><rect x="1365.46" y="647.0" width="112.9" height="118.50" fill="#cccccc"/><rect x="1365.46" y="647.0" width="112.9" height="59.00" fill="#bed0cc"/><rect x="1366.36" y="647.9" width="111.10000000000001" height="116.70" fill="none" stroke="#f8f8f8" stroke-width="1.8"/><text x="1422.11" y="781.80" font-size="14.3" fill="#fff" text-anchor="middle">80</text><rect x="1497.73" y="647.0" width="112.9" height="118.50" fill="#e6e6e6"/><rect x="1497.73" y="647.0" width="112.9" height="59.00" fill="#d8e8e8"/><rect x="1498.63" y="647.9" width="111.10000000000001" height="116.70" fill="none" stroke="#f8f8f8" stroke-width="1.8"/><text x="1554.38" y="781.80" font-size="14.3" fill="#fff" text-anchor="middle">90</text><rect x="1630.00" y="647.0" width="112.9" height="118.50" fill="#fafafa"/><rect x="1630.00" y="647.0" width="112.9" height="59.00" fill="#eeffff"/><rect x="1630.90" y="647.9" width="111.10000000000001" height="116.70" fill="none" stroke="#f8f8f8" stroke-width="1.8"/><text x="1686.65" y="781.80" font-size="14.3" fill="#fff" text-anchor="middle">100</text><text transform="translate(298.6 673.6) rotate(-90)" text-anchor="middle" font-size="14.3" fill="#fff" textLength="40" lengthAdjust="spacingAndGlyphs">Actual</text><text transform="translate(298.6 739.6) rotate(-90)" text-anchor="middle" font-size="14.3" fill="#fff" textLength="39.4" lengthAdjust="spacingAndGlyphs">Target</text></svg>
</section>
<section id="readings">
<div class="a" style="left:0;top:792.5px;width:1920px;height:373.5px;background:#333"></div>
<div class="t " style="top:818.00px;font-size:33.8px;line-height:44px;color:#f4f4f4;left:17.20px;transform-origin:0 50%;transform:scaleX(1.0169);">Current Reading</div>
<div class="t " style="top:871.00px;font-size:29.4px;line-height:39px;color:#f4f4f4;left:17.50px;transform-origin:0 50%;transform:scaleX(0.9805);">x: 0,3014</div>
<div class="t " style="top:918.00px;font-size:29.4px;line-height:39px;color:#f4f4f4;left:17.50px;transform-origin:0 50%;transform:scaleX(0.9805);">y: 0,3292</div>
<div class="t " style="top:966.00px;font-size:29.4px;line-height:39px;color:#f4f4f4;left:17.50px;transform-origin:0 50%;transform:scaleX(0.9757);">fL: 172,53</div>
<div class="t " style="top:1013.00px;font-size:29.4px;line-height:39px;color:#f4f4f4;left:17.50px;transform-origin:0 50%;transform:scaleX(1.0214);">cd/m²: 591,14</div>
<div class="a" style="left:377px;top:817px;width:336.5px;height:247px;background:#2d2d2d;border:8px solid #1f1f1f"></div>
<svg style="position:absolute;left:378px;top:818px" width="335" height="246" viewBox="378 818 335 246" ><defs><linearGradient id="c0" x1="0" x2="1" y1="0" y2="0"><stop offset="0.000" stop-color="#87ffce"/><stop offset="0.071" stop-color="#90ffce"/><stop offset="0.143" stop-color="#9bffce"/><stop offset="0.214" stop-color="#a5ffcd"/><stop offset="0.286" stop-color="#afffcd"/><stop offset="0.357" stop-color="#baffcc"/><stop offset="0.429" stop-color="#c5ffcc"/><stop offset="0.500" stop-color="#d0ffcb"/><stop offset="0.571" stop-color="#dbffcb"/><stop offset="0.643" stop-color="#e7ffca"/><stop offset="0.714" stop-color="#f3ffca"/><stop offset="0.786" stop-color="#ffffc9"/><stop offset="0.857" stop-color="#fff4c0"/><stop offset="0.929" stop-color="#ffe9b7"/><stop offset="1.000" stop-color="#ffdfae"/></linearGradient><linearGradient id="c1" x1="0" x2="1" y1="0" y2="0"><stop offset="0.000" stop-color="#87ffd0"/><stop offset="0.071" stop-color="#91ffcf"/><stop offset="0.143" stop-color="#9cffcf"/><stop offset="0.214" stop-color="#a6ffce"/><stop offset="0.286" stop-color="#b0ffce"/><stop offset="0.357" stop-color="#bbffce"/><stop offset="0.429" stop-color="#c6ffcd"/><stop offset="0.500" stop-color="#d1ffcd"/><stop offset="0.571" stop-color="#ddffcc"/><stop offset="0.643" stop-color="#e8ffcc"/><stop offset="0.714" stop-color="#f4ffcb"/><stop offset="0.786" stop-color="#fffeca"/><stop offset="0.857" stop-color="#fff2c0"/><stop offset="0.929" stop-color="#ffe7b7"/><stop offset="1.000" stop-color="#ffddaf"/></linearGradient><linearGradient id="c2" x1="0" x2="1" y1="0" y2="0"><stop offset="0.000" stop-color="#88ffd1"/><stop offset="0.071" stop-color="#92ffd1"/><stop offset="0.143" stop-color="#9dffd0"/><stop offset="0.214" stop-color="#a7ffd0"/><stop offset="0.286" stop-color="#b2ffcf"/><stop offset="0.357" stop-color="#bcffcf"/><stop offset="0.429" stop-color="#c7ffcf"/><stop offset="0.500" stop-color="#d3ffce"/><stop offset="0.571" stop-color="#deffce"/><stop offset="0.643" stop-color="#eaffcd"/><stop offset="0.714" stop-color="#f6ffcd"/><stop offset="0.786" stop-color="#fffcca"/><stop offset="0.857" stop-color="#fff1c0"/><stop offset="0.929" stop-color="#ffe6b7"/><stop offset="1.000" stop-color="#ffdcaf"/></linearGradient><linearGradient id="c3" x1="0" x2="1" y1="0" y2="0"><stop offset="0.000" stop-color="#89ffd2"/><stop offset="0.071" stop-color="#93ffd2"/><stop offset="0.143" stop-color="#9effd2"/><stop offset="0.214" stop-color="#a8ffd1"/><stop offset="0.286" stop-color="#b3ffd1"/><stop offset="0.357" stop-color="#beffd0"/><stop offset="0.429" stop-color="#c9ffd0"/><stop offset="0.500" stop-color="#d4ffcf"/><stop offset="0.571" stop-color="#dfffcf"/><stop offset="0.643" stop-color="#ebffcf"/><stop offset="0.714" stop-color="#f7ffce"/><stop offset="0.786" stop-color="#fffbca"/><stop offset="0.857" stop-color="#ffefc1"/><stop offset="0.929" stop-color="#ffe5b8"/><stop offset="1.000" stop-color="#ffdbaf"/></linearGradient><linearGradient id="c4" x1="0" x2="1" y1="0" y2="0"><stop offset="0.000" stop-color="#8affd4"/><stop offset="0.071" stop-color="#95ffd3"/><stop offset="0.143" stop-color="#9fffd3"/><stop offset="0.214" stop-color="#a9ffd3"/><stop offset="0.286" stop-color="#b4ffd2"/><stop offset="0.357" stop-color="#bfffd2"/><stop offset="0.429" stop-color="#caffd1"/><stop offset="0.500" stop-color="#d5ffd1"/><stop offset="0.571" stop-color="#e1ffd1"/><stop offset="0.643" stop-color="#edffd0"/><stop offset="0.714" stop-color="#f9ffd0"/><stop offset="0.786" stop-color="#fff9cb"/><stop offset="0.857" stop-color="#ffeec1"/><stop offset="0.929" stop-color="#ffe3b8"/><stop offset="1.000" stop-color="#ffd9af"/></linearGradient><linearGradient id="c5" x1="0" x2="1" y1="0" y2="0"><stop offset="0.000" stop-color="#8bffd5"/><stop offset="0.071" stop-color="#96ffd5"/><stop offset="0.143" stop-color="#a0ffd4"/><stop offset="0.214" stop-color="#aaffd4"/><stop offset="0.286" stop-color="#b5ffd4"/><stop offset="0.357" stop-color="#c0ffd3"/><stop offset="0.429" stop-color="#cbffd3"/><stop offset="0.500" stop-color="#d7ffd2"/><stop offset="0.571" stop-color="#e2ffd2"/><stop offset="0.643" stop-color="#eeffd2"/><stop offset="0.714" stop-color="#faffd1"/><stop offset="0.786" stop-color="#fff8cb"/><stop offset="0.857" stop-color="#ffecc1"/><stop offset="0.929" stop-color="#ffe2b8"/><stop offset="1.000" stop-color="#ffd8b0"/></linearGradient><linearGradient id="c6" x1="0" x2="1" y1="0" y2="0"><stop offset="0.000" stop-color="#8cffd7"/><stop offset="0.071" stop-color="#97ffd6"/><stop offset="0.143" stop-color="#a1ffd6"/><stop offset="0.214" stop-color="#acffd5"/><stop offset="0.286" stop-color="#b6ffd5"/><stop offset="0.357" stop-color="#c1ffd5"/><stop offset="0.429" stop-color="#cdffd4"/><stop offset="0.500" stop-color="#d8ffd4"/><stop offset="0.571" stop-color="#e4ffd3"/><stop offset="0.643" stop-color="#f0ffd3"/><stop offset="0.714" stop-color="#fcffd3"/><stop offset="0.786" stop-color="#fff6cb"/><stop offset="0.857" stop-color="#ffebc1"/><stop offset="0.929" stop-color="#ffe1b8"/><stop offset="1.000" stop-color="#ffd7b0"/></linearGradient><linearGradient id="c7" x1="0" x2="1" y1="0" y2="0"><stop offset="0.000" stop-color="#8dffd8"/><stop offset="0.071" stop-color="#98ffd8"/><stop offset="0.143" stop-color="#a2ffd7"/><stop offset="0.214" stop-color="#adffd7"/><stop offset="0.286" stop-color="#b8ffd6"/><stop offset="0.357" stop-color="#c3ffd6"/><stop offset="0.429" stop-color="#ceffd6"/><stop offset="0.500" stop-color="#d9ffd5"/><stop offset="0.571" stop-color="#e5ffd5"/><stop offset="0.643" stop-color="#f1ffd5"/><stop offset="0.714" stop-color="#fdffd4"/><stop offset="0.786" stop-color="#fff5cb"/><stop offset="0.857" stop-color="#ffeac2"/><stop offset="0.929" stop-color="#ffdfb9"/><stop offset="1.000" stop-color="#ffd5b0"/></linearGradient><linearGradient id="c8" x1="0" x2="1" y1="0" y2="0"><stop offset="0.000" stop-color="#8fffd9"/><stop offset="0.071" stop-color="#99ffd9"/><stop offset="0.143" stop-color="#a3ffd9"/><stop offset="0.214" stop-color="#aeffd8"/><stop offset="0.286" stop-color="#b9ffd8"/><stop offset="0.357" stop-color="#c4ffd8"/><stop offset="0.429" stop-color="#cfffd7"/><stop offset="0.500" stop-color="#dbffd7"/><stop offset="0.571" stop-color="#e7ffd6"/><stop offset="0.643" stop-color="#f3ffd6"/><stop offset="0.714" stop-color="#ffffd6"/><stop offset="0.786" stop-color="#fff3cb"/><stop offset="0.857" stop-color="#ffe8c2"/><stop offset="0.929" stop-color="#ffdeb9"/><stop offset="1.000" stop-color="#ffd4b0"/></linearGradient><linearGradient id="c9" x1="0" x2="1" y1="0" y2="0"><stop offset="0.000" stop-color="#90ffdb"/><stop offset="0.071" stop-color="#9affda"/><stop offset="0.143" stop-color="#a4ffda"/><stop offset="0.214" stop-color="#afffda"/><stop offset="0.286" stop-color="#baffd9"/><stop offset="0.357" stop-color="#c5ffd9"/><stop offset="0.429" stop-color="#d1ffd9"/><stop offset="0.500" stop-color="#dcffd8"/><stop offset="0.571" stop-color="#e8ffd8"/><stop offset="0.643" stop-color="#f4ffd8"/><stop offset="0.714" stop-color="#fffed6"/><stop offset="0.786" stop-color="#fff2cc"/><stop offset="0.857" stop-color="#ffe7c2"/><stop offset="0.929" stop-color="#ffdcb9"/><stop offset="1.000" stop-color="#ffd3b1"/></linearGradient><linearGradient id="c10" x1="0" x2="1" y1="0" y2="0"><stop offset="0.000" stop-color="#91ffdc"/><stop offset="0.071" stop-color="#9bffdc"/><stop offset="0.143" stop-color="#a6ffdc"/><stop offset="0.214" stop-color="#b0ffdb"/><stop offset="0.286" stop-color="#bbffdb"/><stop offset="0.357" stop-color="#c6ffdb"/><stop offset="0.429" stop-color="#d2ffda"/><stop offset="0.500" stop-color="#deffda"/><stop offset="0.571" stop-color="#e9ffda"/><stop offset="0.643" stop-color="#f6ffd9"/><stop offset="0.714" stop-color="#fffcd6"/><stop offset="0.786" stop-color="#fff0cc"/><stop offset="0.857" stop-color="#ffe5c2"/><stop offset="0.929" stop-color="#ffdbb9"/><stop offset="1.000" stop-color="#ffd2b1"/></linearGradient><linearGradient id="c11" x1="0" x2="1" y1="0" y2="0"><stop offset="0.000" stop-color="#92ffde"/><stop offset="0.071" stop-color="#9cffdd"/><stop offset="0.143" stop-color="#a7ffdd"/><stop offset="0.214" stop-color="#b1ffdd"/><stop offset="0.286" stop-color="#bdffdc"/><stop offset="0.357" stop-color="#c8ffdc"/><stop offset="0.429" stop-color="#d3ffdc"/><stop offset="0.500" stop-color="#dfffdb"/><stop offset="0.571" stop-color="#ebffdb"/><stop offset="0.643" stop-color="#f7ffdb"/><stop offset="0.714" stop-color="#fffad6"/><stop offset="0.786" stop-color="#ffefcc"/><stop offset="0.857" stop-color="#ffe4c2"/><stop offset="0.929" stop-color="#ffdaba"/><stop offset="1.000" stop-color="#ffd0b1"/></linearGradient><linearGradient id="c12" x1="0" x2="1" y1="0" y2="0"><stop offset="0.000" stop-color="#93ffdf"/><stop offset="0.071" stop-color="#9dffdf"/><stop offset="0.143" stop-color="#a8ffde"/><stop offset="0.214" stop-color="#b3ffde"/><stop offset="0.286" stop-color="#beffde"/><stop offset="0.357" stop-color="#c9ffde"/><stop offset="0.429" stop-color="#d5ffdd"/><stop offset="0.500" stop-color="#e0ffdd"/><stop offset="0.571" stop-color="#ecffdd"/><stop offset="0.643" stop-color="#f9ffdc"/><stop offset="0.714" stop-color="#fff9d7"/><stop offset="0.786" stop-color="#ffedcc"/><stop offset="0.857" stop-color="#ffe3c3"/><stop offset="0.929" stop-color="#ffd8ba"/><stop offset="1.000" stop-color="#ffcfb1"/></linearGradient><linearGradient id="c13" x1="0" x2="1" y1="0" y2="0"><stop offset="0.000" stop-color="#94ffe1"/><stop offset="0.071" stop-color="#9effe0"/><stop offset="0.143" stop-color="#a9ffe0"/><stop offset="0.214" stop-color="#b4ffe0"/><stop offset="0.286" stop-color="#bfffdf"/><stop offset="0.357" stop-color="#caffdf"/><stop offset="0.429" stop-color="#d6ffdf"/><stop offset="0.500" stop-color="#e2ffde"/><stop offset="0.571" stop-color="#eeffde"/><stop offset="0.643" stop-color="#faffde"/><stop offset="0.714" stop-color="#fff7d7"/><stop offset="0.786" stop-color="#ffeccd"/><stop offset="0.857" stop-color="#ffe1c3"/><stop offset="0.929" stop-color="#ffd7ba"/><stop offset="1.000" stop-color="#ffceb2"/></linearGradient><linearGradient id="c14" x1="0" x2="1" y1="0" y2="0"><stop offset="0.000" stop-color="#95ffe2"/><stop offset="0.071" stop-color="#9fffe2"/><stop offset="0.143" stop-color="#aaffe1"/><stop offset="0.214" stop-color="#b5ffe1"/><stop offset="0.286" stop-color="#c0ffe1"/><stop offset="0.357" stop-color="#ccffe1"/><stop offset="0.429" stop-color="#d7ffe0"/><stop offset="0.500" stop-color="#e3ffe0"/><stop offset="0.571" stop-color="#efffe0"/><stop offset="0.643" stop-color="#fcffdf"/><stop offset="0.714" stop-color="#fff6d7"/><stop offset="0.786" stop-color="#ffeacd"/><stop offset="0.857" stop-color="#ffe0c3"/><stop offset="0.929" stop-color="#ffd6ba"/><stop offset="1.000" stop-color="#ffcdb2"/></linearGradient><linearGradient id="c15" x1="0" x2="1" y1="0" y2="0"><stop offset="0.000" stop-color="#96ffe3"/><stop offset="0.071" stop-color="#a1ffe3"/><stop offset="0.143" stop-color="#abffe3"/><stop offset="0.214" stop-color="#b6ffe3"/><stop offset="0.286" stop-color="#c2ffe2"/><stop offset="0.357" stop-color="#cdffe2"/><stop offset="0.429" stop-color="#d9ffe2"/><stop offset="0.500" stop-color="#e5ffe2"/><stop offset="0.571" stop-color="#f1ffe1"/><stop offset="0.643" stop-color="#fdffe1"/><stop offset="0.714" stop-color="#fff4d7"/><stop offset="0.786" stop-color="#ffe9cd"/><stop offset="0.857" stop-color="#ffdec3"/><stop offset="0.929" stop-color="#ffd4bb"/><stop offset="1.000" stop-color="#ffcbb2"/></linearGradient><linearGradient id="c16" x1="0" x2="1" y1="0" y2="0"><stop offset="0.000" stop-color="#97ffe5"/><stop offset="0.071" stop-color="#a2ffe5"/><stop offset="0.143" stop-color="#adffe4"/><stop offset="0.214" stop-color="#b8ffe4"/><stop offset="0.286" stop-color="#c3ffe4"/><stop offset="0.357" stop-color="#ceffe4"/><stop offset="0.429" stop-color="#daffe3"/><stop offset="0.500" stop-color="#e6ffe3"/><stop offset="0.571" stop-color="#f3ffe3"/><stop offset="0.643" stop-color="#ffffe3"/><stop offset="0.714" stop-color="#fff3d8"/><stop offset="0.786" stop-color="#ffe7cd"/><stop offset="0.857" stop-color="#ffddc4"/><stop offset="0.929" stop-color="#ffd3bb"/><stop offset="1.000" stop-color="#ffcab2"/></linearGradient><linearGradient id="c17" x1="0" x2="1" y1="0" y2="0"><stop offset="0.000" stop-color="#98ffe6"/><stop offset="0.071" stop-color="#a3ffe6"/><stop offset="0.143" stop-color="#aeffe6"/><stop offset="0.214" stop-color="#b9ffe6"/><stop offset="0.286" stop-color="#c4ffe6"/><stop offset="0.357" stop-color="#d0ffe5"/><stop offset="0.429" stop-color="#dcffe5"/><stop offset="0.500" stop-color="#e8ffe5"/><stop offset="0.571" stop-color="#f4ffe5"/><stop offset="0.643" stop-color="#fffde3"/><stop offset="0.714" stop-color="#fff1d8"/><stop offset="0.786" stop-color="#ffe6cd"/><stop offset="0.857" stop-color="#ffdcc4"/><stop offset="0.929" stop-color="#ffd2bb"/><stop offset="1.000" stop-color="#ffc9b3"/></linearGradient><linearGradient id="c18" x1="0" x2="1" y1="0" y2="0"><stop offset="0.000" stop-color="#99ffe8"/><stop offset="0.071" stop-color="#a4ffe8"/><stop offset="0.143" stop-color="#afffe8"/><stop offset="0.214" stop-color="#baffe7"/><stop offset="0.286" stop-color="#c6ffe7"/><stop offset="0.357" stop-color="#d1ffe7"/><stop offset="0.429" stop-color="#ddffe7"/><stop offset="0.500" stop-color="#e9ffe6"/><stop offset="0.571" stop-color="#f6ffe6"/><stop offset="0.643" stop-color="#fffce3"/><stop offset="0.714" stop-color="#fff0d8"/><stop offset="0.786" stop-color="#ffe5ce"/><stop offset="0.857" stop-color="#ffdac4"/><stop offset="0.929" stop-color="#ffd1bb"/><stop offset="1.000" stop-color="#ffc8b3"/></linearGradient><linearGradient id="c19" x1="0" x2="1" y1="0" y2="0"><stop offset="0.000" stop-color="#9affe9"/><stop offset="0.071" stop-color="#a5ffe9"/><stop offset="0.143" stop-color="#b0ffe9"/><stop offset="0.214" stop-color="#bbffe9"/><stop offset="0.286" stop-color="#c7ffe9"/><stop offset="0.357" stop-color="#d3ffe8"/><stop offset="0.429" stop-color="#dfffe8"/><stop offset="0.500" stop-color="#ebffe8"/><stop offset="0.571" stop-color="#f7ffe8"/><stop offset="0.643" stop-color="#fffae3"/><stop offset="0.714" stop-color="#ffeed8"/><stop offset="0.786" stop-color="#ffe3ce"/><stop offset="0.857" stop-color="#ffd9c4"/><stop offset="0.929" stop-color="#ffcfbb"/><stop offset="1.000" stop-color="#ffc6b3"/></linearGradient><linearGradient id="c20" x1="0" x2="1" y1="0" y2="0"><stop offset="0.000" stop-color="#9bffeb"/><stop offset="0.071" stop-color="#a6ffeb"/><stop offset="0.143" stop-color="#b1ffeb"/><stop offset="0.214" stop-color="#bdffea"/><stop offset="0.286" stop-color="#c8ffea"/><stop offset="0.357" stop-color="#d4ffea"/><stop offset="0.429" stop-color="#e0ffea"/><stop offset="0.500" stop-color="#ecffea"/><stop offset="0.571" stop-color="#f9ffea"/><stop offset="0.643" stop-color="#fff9e3"/><stop offset="0.714" stop-color="#ffedd8"/><stop offset="0.786" stop-color="#ffe2ce"/><stop offset="0.857" stop-color="#ffd7c5"/><stop offset="0.929" stop-color="#ffcebc"/><stop offset="1.000" stop-color="#ffc5b3"/></linearGradient><linearGradient id="c21" x1="0" x2="1" y1="0" y2="0"><stop offset="0.000" stop-color="#9dffed"/><stop offset="0.071" stop-color="#a7ffec"/><stop offset="0.143" stop-color="#b3ffec"/><stop offset="0.214" stop-color="#beffec"/><stop offset="0.286" stop-color="#caffec"/><stop offset="0.357" stop-color="#d5ffec"/><stop offset="0.429" stop-color="#e2ffec"/><stop offset="0.500" stop-color="#eeffeb"/><stop offset="0.571" stop-color="#faffeb"/><stop offset="0.643" stop-color="#fff7e4"/><stop offset="0.714" stop-color="#ffebd9"/><stop offset="0.786" stop-color="#ffe0ce"/><stop offset="0.857" stop-color="#ffd6c5"/><stop offset="0.929" stop-color="#ffcdbc"/><stop offset="1.000" stop-color="#ffc4b4"/></linearGradient><linearGradient id="c22" x1="0" x2="1" y1="0" y2="0"><stop offset="0.000" stop-color="#9effee"/><stop offset="0.071" stop-color="#a9ffee"/><stop offset="0.143" stop-color="#b4ffee"/><stop offset="0.214" stop-color="#bfffee"/><stop offset="0.286" stop-color="#cbffee"/><stop offset="0.357" stop-color="#d7ffed"/><stop offset="0.429" stop-color="#e3ffed"/><stop offset="0.500" stop-color="#efffed"/><stop offset="0.571" stop-color="#fcffed"/><stop offset="0.643" stop-color="#fff5e4"/><stop offset="0.714" stop-color="#ffead9"/><stop offset="0.786" stop-color="#ffdfcf"/><stop offset="0.857" stop-color="#ffd5c5"/><stop offset="0.929" stop-color="#ffcbbc"/><stop offset="1.000" stop-color="#ffc3b4"/></linearGradient><linearGradient id="c23" x1="0" x2="1" y1="0" y2="0"><stop offset="0.000" stop-color="#9ffff0"/><stop offset="0.071" stop-color="#aafff0"/><stop offset="0.143" stop-color="#b5ffef"/><stop offset="0.214" stop-color="#c1ffef"/><stop offset="0.286" stop-color="#ccffef"/><stop offset="0.357" stop-color="#d8ffef"/><stop offset="0.429" stop-color="#e4ffef"/><stop offset="0.500" stop-color="#f1ffef"/><stop offset="0.571" stop-color="#feffef"/><stop offset="0.643" stop-color="#fff4e4"/><stop offset="0.714" stop-color="#ffe8d9"/><stop offset="0.786" stop-color="#ffddcf"/><stop offset="0.857" stop-color="#ffd3c5"/><stop offset="0.929" stop-color="#ffcabc"/><stop offset="1.000" stop-color="#ffc1b4"/></linearGradient><linearGradient id="c24" x1="0" x2="1" y1="0" y2="0"><stop offset="0.000" stop-color="#a0fff1"/><stop offset="0.071" stop-color="#abfff1"/><stop offset="0.143" stop-color="#b6fff1"/><stop offset="0.214" stop-color="#c2fff1"/><stop offset="0.286" stop-color="#cefff1"/><stop offset="0.357" stop-color="#dafff1"/><stop offset="0.429" stop-color="#e6fff1"/><stop offset="0.500" stop-color="#f3fff0"/><stop offset="0.571" stop-color="#fffff0"/><stop offset="0.643" stop-color="#fff2e4"/><stop offset="0.714" stop-color="#ffe7d9"/><stop offset="0.786" stop-color="#ffdccf"/><stop offset="0.857" stop-color="#ffd2c6"/><stop offset="0.929" stop-color="#ffc9bd"/><stop offset="1.000" stop-color="#ffc0b4"/></linearGradient><linearGradient id="c25" x1="0" x2="1" y1="0" y2="0"><stop offset="0.000" stop-color="#a1fff3"/><stop offset="0.071" stop-color="#acfff3"/><stop offset="0.143" stop-color="#b8fff3"/><stop offset="0.214" stop-color="#c3fff3"/><stop offset="0.286" stop-color="#cffff2"/><stop offset="0.357" stop-color="#dbfff2"/><stop offset="0.429" stop-color="#e8fff2"/><stop offset="0.500" stop-color="#f4fff2"/><stop offset="0.571" stop-color="#fffdf0"/><stop offset="0.643" stop-color="#fff1e4"/><stop offset="0.714" stop-color="#ffe5d9"/><stop offset="0.786" stop-color="#ffdbcf"/><stop offset="0.857" stop-color="#ffd1c6"/><stop offset="0.929" stop-color="#ffc8bd"/><stop offset="1.000" stop-color="#ffbfb5"/></linearGradient><linearGradient id="c26" x1="0" x2="1" y1="0" y2="0"><stop offset="0.000" stop-color="#a2fff4"/><stop offset="0.071" stop-color="#aefff4"/><stop offset="0.143" stop-color="#b9fff4"/><stop offset="0.214" stop-color="#c5fff4"/><stop offset="0.286" stop-color="#d0fff4"/><stop offset="0.357" stop-color="#ddfff4"/><stop offset="0.429" stop-color="#e9fff4"/><stop offset="0.500" stop-color="#f6fff4"/><stop offset="0.571" stop-color="#fffbf0"/><stop offset="0.643" stop-color="#ffefe4"/><stop offset="0.714" stop-color="#ffe4da"/><stop offset="0.786" stop-color="#ffd9cf"/><stop offset="0.857" stop-color="#ffcfc6"/><stop offset="0.929" stop-color="#ffc6bd"/><stop offset="1.000" stop-color="#ffbeb5"/></linearGradient><linearGradient id="c27" x1="0" x2="1" y1="0" y2="0"><stop offset="0.000" stop-color="#a4fff6"/><stop offset="0.071" stop-color="#affff6"/><stop offset="0.143" stop-color="#bafff6"/><stop offset="0.214" stop-color="#c6fff6"/><stop offset="0.286" stop-color="#d2fff6"/><stop offset="0.357" stop-color="#defff6"/><stop offset="0.429" stop-color="#ebfff6"/><stop offset="0.500" stop-color="#f7fff6"/><stop offset="0.571" stop-color="#fffaf0"/><stop offset="0.643" stop-color="#ffeee5"/><stop offset="0.714" stop-color="#ffe2da"/><stop offset="0.786" stop-color="#ffd8d0"/><stop offset="0.857" stop-color="#ffcec6"/><stop offset="0.929" stop-color="#ffc5bd"/><stop offset="1.000" stop-color="#ffbdb5"/></linearGradient><linearGradient id="c28" x1="0" x2="1" y1="0" y2="0"><stop offset="0.000" stop-color="#a5fff8"/><stop offset="0.071" stop-color="#b0fff8"/><stop offset="0.143" stop-color="#bcfff8"/><stop offset="0.214" stop-color="#c7fff8"/><stop offset="0.286" stop-color="#d3fff7"/><stop offset="0.357" stop-color="#e0fff7"/><stop offset="0.429" stop-color="#ecfff7"/><stop offset="0.500" stop-color="#f9fff7"/><stop offset="0.571" stop-color="#fff8f1"/><stop offset="0.643" stop-color="#ffece5"/><stop offset="0.714" stop-color="#ffe1da"/><stop offset="0.786" stop-color="#ffd6d0"/><stop offset="0.857" stop-color="#ffcdc6"/><stop offset="0.929" stop-color="#ffc4be"/><stop offset="1.000" stop-color="#ffbbb5"/></linearGradient><linearGradient id="c29" x1="0" x2="1" y1="0" y2="0"><stop offset="0.000" stop-color="#a6fff9"/><stop offset="0.071" stop-color="#b1fff9"/><stop offset="0.143" stop-color="#bdfff9"/><stop offset="0.214" stop-color="#c9fff9"/><stop offset="0.286" stop-color="#d5fff9"/><stop offset="0.357" stop-color="#e1fff9"/><stop offset="0.429" stop-color="#eefff9"/><stop offset="0.500" stop-color="#fbfff9"/><stop offset="0.571" stop-color="#fff6f1"/><stop offset="0.643" stop-color="#ffebe5"/><stop offset="0.714" stop-color="#ffdfda"/><stop offset="0.786" stop-color="#ffd5d0"/><stop offset="0.857" stop-color="#ffccc7"/><stop offset="0.929" stop-color="#ffc3be"/><stop offset="1.000" stop-color="#ffbab6"/></linearGradient><linearGradient id="c30" x1="0" x2="1" y1="0" y2="0"><stop offset="0.000" stop-color="#a7fffb"/><stop offset="0.071" stop-color="#b3fffb"/><stop offset="0.143" stop-color="#befffb"/><stop offset="0.214" stop-color="#cafffb"/><stop offset="0.286" stop-color="#d6fffb"/><stop offset="0.357" stop-color="#e3fffb"/><stop offset="0.429" stop-color="#effffb"/><stop offset="0.500" stop-color="#fcfffb"/><stop offset="0.571" stop-color="#fff5f1"/><stop offset="0.643" stop-color="#ffe9e5"/><stop offset="0.714" stop-color="#ffdeda"/><stop offset="0.786" stop-color="#ffd4d0"/><stop offset="0.857" stop-color="#ffcac7"/><stop offset="0.929" stop-color="#ffc1be"/><stop offset="1.000" stop-color="#ffb9b6"/></linearGradient><linearGradient id="c31" x1="0" x2="1" y1="0" y2="0"><stop offset="0.000" stop-color="#a8fffd"/><stop offset="0.071" stop-color="#b4fffd"/><stop offset="0.143" stop-color="#c0fffd"/><stop offset="0.214" stop-color="#cbfffd"/><stop offset="0.286" stop-color="#d8fffd"/><stop offset="0.357" stop-color="#e4fffd"/><stop offset="0.429" stop-color="#f1fffd"/><stop offset="0.500" stop-color="#fefffd"/><stop offset="0.571" stop-color="#fff3f1"/><stop offset="0.643" stop-color="#ffe7e5"/><stop offset="0.714" stop-color="#ffdddb"/><stop offset="0.786" stop-color="#ffd2d0"/><stop offset="0.857" stop-color="#ffc9c7"/><stop offset="0.929" stop-color="#ffc0be"/><stop offset="1.000" stop-color="#ffb8b6"/></linearGradient><linearGradient id="c32" x1="0" x2="1" y1="0" y2="0"><stop offset="0.000" stop-color="#aafffe"/><stop offset="0.071" stop-color="#b5fffe"/><stop offset="0.143" stop-color="#c1fffe"/><stop offset="0.214" stop-color="#cdfffe"/><stop offset="0.286" stop-color="#d9fffe"/><stop offset="0.357" stop-color="#e6fffe"/><stop offset="0.429" stop-color="#f3fffe"/><stop offset="0.500" stop-color="#fffefe"/><stop offset="0.571" stop-color="#fff2f1"/><stop offset="0.643" stop-color="#ffe6e6"/><stop offset="0.714" stop-color="#ffdbdb"/><stop offset="0.786" stop-color="#ffd1d1"/><stop offset="0.857" stop-color="#ffc8c7"/><stop offset="0.929" stop-color="#ffbfbf"/><stop offset="1.000" stop-color="#ffb7b6"/></linearGradient><linearGradient id="c33" x1="0" x2="1" y1="0" y2="0"><stop offset="0.000" stop-color="#aafeff"/><stop offset="0.071" stop-color="#b6feff"/><stop offset="0.143" stop-color="#c1feff"/><stop offset="0.214" stop-color="#cdfeff"/><stop offset="0.286" stop-color="#dafeff"/><stop offset="0.357" stop-color="#e6feff"/><stop offset="0.429" stop-color="#f3feff"/><stop offset="0.500" stop-color="#fffdfe"/><stop offset="0.571" stop-color="#fff0f1"/><stop offset="0.643" stop-color="#ffe4e6"/><stop offset="0.714" stop-color="#ffdadb"/><stop offset="0.786" stop-color="#ffd0d1"/><stop offset="0.857" stop-color="#ffc6c8"/><stop offset="0.929" stop-color="#ffbebf"/><stop offset="1.000" stop-color="#ffb5b7"/></linearGradient><linearGradient id="c34" x1="0" x2="1" y1="0" y2="0"><stop offset="0.000" stop-color="#aafcff"/><stop offset="0.071" stop-color="#b6fcff"/><stop offset="0.143" stop-color="#c1fcff"/><stop offset="0.214" stop-color="#cdfcff"/><stop offset="0.286" stop-color="#dafcff"/><stop offset="0.357" stop-color="#e6fcff"/><stop offset="0.429" stop-color="#f3fcff"/><stop offset="0.500" stop-color="#fffbfe"/><stop offset="0.571" stop-color="#ffeff2"/><stop offset="0.643" stop-color="#ffe3e6"/><stop offset="0.714" stop-color="#ffd8db"/><stop offset="0.786" stop-color="#ffced1"/><stop offset="0.857" stop-color="#ffc5c8"/><stop offset="0.929" stop-color="#ffbcbf"/><stop offset="1.000" stop-color="#ffb4b7"/></linearGradient><linearGradient id="c35" x1="0" x2="1" y1="0" y2="0"><stop offset="0.000" stop-color="#aafbff"/><stop offset="0.071" stop-color="#b6fbff"/><stop offset="0.143" stop-color="#c1faff"/><stop offset="0.214" stop-color="#cdfaff"/><stop offset="0.286" stop-color="#dafaff"/><stop offset="0.357" stop-color="#e6faff"/><stop offset="0.429" stop-color="#f3faff"/><stop offset="0.500" stop-color="#fff9fe"/><stop offset="0.571" stop-color="#ffedf2"/><stop offset="0.643" stop-color="#ffe2e6"/><stop offset="0.714" stop-color="#ffd7db"/><stop offset="0.786" stop-color="#ffcdd1"/><stop offset="0.857" stop-color="#ffc4c8"/><stop offset="0.929" stop-color="#ffbbbf"/><stop offset="1.000" stop-color="#ffb3b7"/></linearGradient><linearGradient id="c36" x1="0" x2="1" y1="0" y2="0"><stop offset="0.000" stop-color="#aaf9ff"/><stop offset="0.071" stop-color="#b6f9ff"/><stop offset="0.143" stop-color="#c2f9ff"/><stop offset="0.214" stop-color="#cdf9ff"/><stop offset="0.286" stop-color="#daf9ff"/><stop offset="0.357" stop-color="#e6f8ff"/><stop offset="0.429" stop-color="#f3f8ff"/><stop offset="0.500" stop-color="#fff8fe"/><stop offset="0.571" stop-color="#ffebf2"/><stop offset="0.643" stop-color="#ffe0e6"/><stop offset="0.714" stop-color="#ffd5dc"/><stop offset="0.786" stop-color="#ffccd1"/><stop offset="0.857" stop-color="#ffc2c8"/><stop offset="0.929" stop-color="#ffbabf"/><stop offset="1.000" stop-color="#ffb2b7"/></linearGradient><linearGradient id="c37" x1="0" x2="1" y1="0" y2="0"><stop offset="0.000" stop-color="#abf7ff"/><stop offset="0.071" stop-color="#b6f7ff"/><stop offset="0.143" stop-color="#c2f7ff"/><stop offset="0.214" stop-color="#cdf7ff"/><stop offset="0.286" stop-color="#daf7ff"/><stop offset="0.357" stop-color="#e6f7ff"/><stop offset="0.429" stop-color="#f3f7ff"/><stop offset="0.500" stop-color="#fff6ff"/><stop offset="0.571" stop-color="#ffeaf2"/><stop offset="0.643" stop-color="#ffdfe6"/><stop offset="0.714" stop-color="#ffd4dc"/><stop offset="0.786" stop-color="#ffcad2"/><stop offset="0.857" stop-color="#ffc1c8"/><stop offset="0.929" stop-color="#ffb9c0"/><stop offset="1.000" stop-color="#ffb1b7"/></linearGradient><linearGradient id="c38" x1="0" x2="1" y1="0" y2="0"><stop offset="0.000" stop-color="#abf6ff"/><stop offset="0.071" stop-color="#b6f6ff"/><stop offset="0.143" stop-color="#c2f5ff"/><stop offset="0.214" stop-color="#cdf5ff"/><stop offset="0.286" stop-color="#daf5ff"/><stop offset="0.357" stop-color="#e6f5ff"/><stop offset="0.429" stop-color="#f2f5ff"/><stop offset="0.500" stop-color="#fff4ff"/><stop offset="0.571" stop-color="#ffe8f2"/><stop offset="0.643" stop-color="#ffdde7"/><stop offset="0.714" stop-color="#ffd3dc"/><stop offset="0.786" stop-color="#ffc9d2"/><stop offset="0.857" stop-color="#ffc0c9"/><stop offset="0.929" stop-color="#ffb8c0"/><stop offset="1.000" stop-color="#ffb0b8"/></linearGradient><linearGradient id="c39" x1="0" x2="1" y1="0" y2="0"><stop offset="0.000" stop-color="#abf4ff"/><stop offset="0.071" stop-color="#b6f4ff"/><stop offset="0.143" stop-color="#c2f4ff"/><stop offset="0.214" stop-color="#cdf4ff"/><stop offset="0.286" stop-color="#daf3ff"/><stop offset="0.357" stop-color="#e6f3ff"/><stop offset="0.429" stop-color="#f2f3ff"/><stop offset="0.500" stop-color="#fff3ff"/><stop offset="0.571" stop-color="#ffe7f2"/><stop offset="0.643" stop-color="#ffdce7"/><stop offset="0.714" stop-color="#ffd1dc"/><stop offset="0.786" stop-color="#ffc8d2"/><stop offset="0.857" stop-color="#ffbfc9"/><stop offset="0.929" stop-color="#ffb6c0"/><stop offset="1.000" stop-color="#ffaeb8"/></linearGradient><linearGradient id="c40" x1="0" x2="1" y1="0" y2="0"><stop offset="0.000" stop-color="#abf2ff"/><stop offset="0.071" stop-color="#b6f2ff"/><stop offset="0.143" stop-color="#c2f2ff"/><stop offset="0.214" stop-color="#cdf2ff"/><stop offset="0.286" stop-color="#d9f2ff"/><stop offset="0.357" stop-color="#e6f2ff"/><stop offset="0.429" stop-color="#f2f1ff"/><stop offset="0.500" stop-color="#fff1ff"/><stop offset="0.571" stop-color="#ffe5f2"/><stop offset="0.643" stop-color="#ffdae7"/><stop offset="0.714" stop-color="#ffd0dc"/><stop offset="0.786" stop-color="#ffc6d2"/><stop offset="0.857" stop-color="#ffbdc9"/><stop offset="0.929" stop-color="#ffb5c0"/><stop offset="1.000" stop-color="#ffadb8"/></linearGradient><linearGradient id="c41" x1="0" x2="1" y1="0" y2="0"><stop offset="0.000" stop-color="#abf1ff"/><stop offset="0.071" stop-color="#b6f1ff"/><stop offset="0.143" stop-color="#c2f0ff"/><stop offset="0.214" stop-color="#cdf0ff"/><stop offset="0.286" stop-color="#d9f0ff"/><stop offset="0.357" stop-color="#e6f0ff"/><stop offset="0.429" stop-color="#f2f0ff"/><stop offset="0.500" stop-color="#fff0ff"/><stop offset="0.571" stop-color="#ffe4f3"/><stop offset="0.643" stop-color="#ffd9e7"/><stop offset="0.714" stop-color="#ffcfdc"/><stop offset="0.786" stop-color="#ffc5d3"/><stop offset="0.857" stop-color="#ffbcc9"/><stop offset="0.929" stop-color="#ffb4c1"/><stop offset="1.000" stop-color="#ffacb8"/></linearGradient><linearGradient id="c42" x1="0" x2="1" y1="0" y2="0"><stop offset="0.000" stop-color="#abefff"/><stop offset="0.071" stop-color="#b6efff"/><stop offset="0.143" stop-color="#c2efff"/><stop offset="0.214" stop-color="#ceefff"/><stop offset="0.286" stop-color="#d9eeff"/><stop offset="0.357" stop-color="#e6eeff"/><stop offset="0.429" stop-color="#f2eeff"/><stop offset="0.500" stop-color="#ffeeff"/><stop offset="0.571" stop-color="#ffe2f3"/><stop offset="0.643" stop-color="#ffd7e7"/><stop offset="0.714" stop-color="#ffcddd"/><stop offset="0.786" stop-color="#ffc4d3"/><stop offset="0.857" stop-color="#ffbbc9"/><stop offset="0.929" stop-color="#ffb3c1"/><stop offset="1.000" stop-color="#ffabb9"/></linearGradient><linearGradient id="c43" x1="0" x2="1" y1="0" y2="0"><stop offset="0.000" stop-color="#abeeff"/><stop offset="0.071" stop-color="#b6edff"/><stop offset="0.143" stop-color="#c2edff"/><stop offset="0.214" stop-color="#ceedff"/><stop offset="0.286" stop-color="#d9edff"/><stop offset="0.357" stop-color="#e6ecff"/><stop offset="0.429" stop-color="#f2ecff"/><stop offset="0.500" stop-color="#ffecff"/><stop offset="0.571" stop-color="#ffe1f3"/><stop offset="0.643" stop-color="#ffd6e7"/><stop offset="0.714" stop-color="#ffccdd"/><stop offset="0.786" stop-color="#ffc2d3"/><stop offset="0.857" stop-color="#ffbaca"/><stop offset="0.929" stop-color="#ffb2c1"/><stop offset="1.000" stop-color="#ffaab9"/></linearGradient><linearGradient id="c44" x1="0" x2="1" y1="0" y2="0"><stop offset="0.000" stop-color="#abecff"/><stop offset="0.071" stop-color="#b6ecff"/><stop offset="0.143" stop-color="#c2ebff"/><stop offset="0.214" stop-color="#ceebff"/><stop offset="0.286" stop-color="#d9ebff"/><stop offset="0.357" stop-color="#e6ebff"/><stop offset="0.429" stop-color="#f2ebff"/><stop offset="0.500" stop-color="#ffeaff"/><stop offset="0.571" stop-color="#ffdff3"/><stop offset="0.643" stop-color="#ffd4e8"/><stop offset="0.714" stop-color="#ffcadd"/><stop offset="0.786" stop-color="#ffc1d3"/><stop offset="0.857" stop-color="#ffb8ca"/><stop offset="0.929" stop-color="#ffb0c1"/><stop offset="1.000" stop-color="#ffa9b9"/></linearGradient><linearGradient id="c45" x1="0" x2="1" y1="0" y2="0"><stop offset="0.000" stop-color="#abeaff"/><stop offset="0.071" stop-color="#b7eaff"/><stop offset="0.143" stop-color="#c2eaff"/><stop offset="0.214" stop-color="#ceeaff"/><stop offset="0.286" stop-color="#d9e9ff"/><stop offset="0.357" stop-color="#e6e9ff"/><stop offset="0.429" stop-color="#f2e9ff"/><stop offset="0.500" stop-color="#fee9ff"/><stop offset="0.571" stop-color="#ffdef3"/><stop offset="0.643" stop-color="#ffd3e8"/><stop offset="0.714" stop-color="#ffc9dd"/><stop offset="0.786" stop-color="#ffc0d3"/><stop offset="0.857" stop-color="#ffb7ca"/><stop offset="0.929" stop-color="#ffafc1"/><stop offset="1.000" stop-color="#ffa8b9"/></linearGradient><linearGradient id="c46" x1="0" x2="1" y1="0" y2="0"><stop offset="0.000" stop-color="#abe9ff"/><stop offset="0.071" stop-color="#b7e9ff"/><stop offset="0.143" stop-color="#c2e8ff"/><stop offset="0.214" stop-color="#cee8ff"/><stop offset="0.286" stop-color="#d9e8ff"/><stop offset="0.357" stop-color="#e5e7ff"/><stop offset="0.429" stop-color="#f2e7ff"/><stop offset="0.500" stop-color="#fee7ff"/><stop offset="0.571" stop-color="#ffdcf3"/><stop offset="0.643" stop-color="#ffd2e8"/><stop offset="0.714" stop-color="#ffc8dd"/><stop offset="0.786" stop-color="#ffbfd3"/><stop offset="0.857" stop-color="#ffb6ca"/><stop offset="0.929" stop-color="#ffaec2"/><stop offset="1.000" stop-color="#ffa7ba"/></linearGradient><linearGradient id="c47" x1="0" x2="1" y1="0" y2="0"><stop offset="0.000" stop-color="#ace7ff"/><stop offset="0.071" stop-color="#b7e7ff"/><stop offset="0.143" stop-color="#c2e7ff"/><stop offset="0.214" stop-color="#cee6ff"/><stop offset="0.286" stop-color="#d9e6ff"/><stop offset="0.357" stop-color="#e5e6ff"/><stop offset="0.429" stop-color="#f2e6ff"/><stop offset="0.500" stop-color="#fee5ff"/><stop offset="0.571" stop-color="#ffdbf4"/><stop offset="0.643" stop-color="#ffd0e8"/><stop offset="0.714" stop-color="#ffc6de"/><stop offset="0.786" stop-color="#ffbdd4"/><stop offset="0.857" stop-color="#ffb5ca"/><stop offset="0.929" stop-color="#ffadc2"/><stop offset="1.000" stop-color="#ffa5ba"/></linearGradient><linearGradient id="c48" x1="0" x2="1" y1="0" y2="0"><stop offset="0.000" stop-color="#ace6ff"/><stop offset="0.071" stop-color="#b7e5ff"/><stop offset="0.143" stop-color="#c2e5ff"/><stop offset="0.214" stop-color="#cee5ff"/><stop offset="0.286" stop-color="#d9e5ff"/><stop offset="0.357" stop-color="#e5e4ff"/><stop offset="0.429" stop-color="#f2e4ff"/><stop offset="0.500" stop-color="#fee4ff"/><stop offset="0.571" stop-color="#ffd9f4"/><stop offset="0.643" stop-color="#ffcfe8"/><stop offset="0.714" stop-color="#ffc5de"/><stop offset="0.786" stop-color="#ffbcd4"/><stop offset="0.857" stop-color="#ffb4cb"/><stop offset="0.929" stop-color="#ffacc2"/><stop offset="1.000" stop-color="#ffa4ba"/></linearGradient><linearGradient id="c49" x1="0" x2="1" y1="0" y2="0"><stop offset="0.000" stop-color="#ace4ff"/><stop offset="0.071" stop-color="#b7e4ff"/><stop offset="0.143" stop-color="#c2e3ff"/><stop offset="0.214" stop-color="#cee3ff"/><stop offset="0.286" stop-color="#d9e3ff"/><stop offset="0.357" stop-color="#e5e3ff"/><stop offset="0.429" stop-color="#f2e2ff"/><stop offset="0.500" stop-color="#fee2ff"/><stop offset="0.571" stop-color="#ffd8f4"/><stop offset="0.643" stop-color="#ffcde8"/><stop offset="0.714" stop-color="#ffc4de"/><stop offset="0.786" stop-color="#ffbbd4"/><stop offset="0.857" stop-color="#ffb2cb"/><stop offset="0.929" stop-color="#ffabc2"/><stop offset="1.000" stop-color="#ffa3ba"/></linearGradient><linearGradient id="c50" x1="0" x2="1" y1="0" y2="0"><stop offset="0.000" stop-color="#ace3ff"/><stop offset="0.071" stop-color="#b7e2ff"/><stop offset="0.143" stop-color="#c2e2ff"/><stop offset="0.214" stop-color="#cee2ff"/><stop offset="0.286" stop-color="#d9e1ff"/><stop offset="0.357" stop-color="#e5e1ff"/><stop offset="0.429" stop-color="#f1e1ff"/><stop offset="0.500" stop-color="#fee0ff"/><stop offset="0.571" stop-color="#ffd6f4"/><stop offset="0.643" stop-color="#ffcce9"/><stop offset="0.714" stop-color="#ffc2de"/><stop offset="0.786" stop-color="#ffbad4"/><stop offset="0.857" stop-color="#ffb1cb"/><stop offset="0.929" stop-color="#ffa9c3"/><stop offset="1.000" stop-color="#ffa2ba"/></linearGradient><linearGradient id="c51" x1="0" x2="1" y1="0" y2="0"><stop offset="0.000" stop-color="#ace1ff"/><stop offset="0.071" stop-color="#b7e1ff"/><stop offset="0.143" stop-color="#c2e0ff"/><stop offset="0.214" stop-color="#cee0ff"/><stop offset="0.286" stop-color="#d9e0ff"/><stop offset="0.357" stop-color="#e5dfff"/><stop offset="0.429" stop-color="#f1dfff"/><stop offset="0.500" stop-color="#fedfff"/><stop offset="0.571" stop-color="#ffd5f4"/><stop offset="0.643" stop-color="#ffcbe9"/><stop offset="0.714" stop-color="#ffc1de"/><stop offset="0.786" stop-color="#ffb8d4"/><stop offset="0.857" stop-color="#ffb0cb"/><stop offset="0.929" stop-color="#ffa8c3"/><stop offset="1.000" stop-color="#ffa1bb"/></linearGradient><linearGradient id="c52" x1="0" x2="1" y1="0" y2="0"><stop offset="0.000" stop-color="#acdfff"/><stop offset="0.071" stop-color="#b7dfff"/><stop offset="0.143" stop-color="#c2dfff"/><stop offset="0.214" stop-color="#cedeff"/><stop offset="0.286" stop-color="#d9deff"/><stop offset="0.357" stop-color="#e5deff"/><stop offset="0.429" stop-color="#f1ddff"/><stop offset="0.500" stop-color="#feddff"/><stop offset="0.571" stop-color="#ffd3f4"/><stop offset="0.643" stop-color="#ffc9e9"/><stop offset="0.714" stop-color="#ffc0de"/><stop offset="0.786" stop-color="#ffb7d5"/><stop offset="0.857" stop-color="#ffafcc"/><stop offset="0.929" stop-color="#ffa7c3"/><stop offset="1.000" stop-color="#ffa0bb"/></linearGradient><linearGradient id="c53" x1="0" x2="1" y1="0" y2="0"><stop offset="0.000" stop-color="#acdeff"/><stop offset="0.071" stop-color="#b7deff"/><stop offset="0.143" stop-color="#c2ddff"/><stop offset="0.214" stop-color="#ceddff"/><stop offset="0.286" stop-color="#d9ddff"/><stop offset="0.357" stop-color="#e5dcff"/><stop offset="0.429" stop-color="#f1dcff"/><stop offset="0.500" stop-color="#fedbff"/><stop offset="0.571" stop-color="#ffd2f4"/><stop offset="0.643" stop-color="#ffc8e9"/><stop offset="0.714" stop-color="#ffbedf"/><stop offset="0.786" stop-color="#ffb6d5"/><stop offset="0.857" stop-color="#ffaecc"/><stop offset="0.929" stop-color="#ffa6c3"/><stop offset="1.000" stop-color="#ff9fbb"/></linearGradient><linearGradient id="c54" x1="0" x2="1" y1="0" y2="0"><stop offset="0.000" stop-color="#acdcff"/><stop offset="0.071" stop-color="#b7dcff"/><stop offset="0.143" stop-color="#c2dcff"/><stop offset="0.214" stop-color="#cedbff"/><stop offset="0.286" stop-color="#d9dbff"/><stop offset="0.357" stop-color="#e5dbff"/><stop offset="0.429" stop-color="#f1daff"/><stop offset="0.500" stop-color="#fddaff"/><stop offset="0.571" stop-color="#ffd0f5"/><stop offset="0.643" stop-color="#ffc6e9"/><stop offset="0.714" stop-color="#ffbddf"/><stop offset="0.786" stop-color="#ffb5d5"/><stop offset="0.857" stop-color="#ffaccc"/><stop offset="0.929" stop-color="#ffa5c3"/><stop offset="1.000" stop-color="#ff9ebb"/></linearGradient><linearGradient id="c55" x1="0" x2="1" y1="0" y2="0"><stop offset="0.000" stop-color="#acdbff"/><stop offset="0.071" stop-color="#b7dbff"/><stop offset="0.143" stop-color="#c2daff"/><stop offset="0.214" stop-color="#cedaff"/><stop offset="0.286" stop-color="#d9d9ff"/><stop offset="0.357" stop-color="#e5d9ff"/><stop offset="0.429" stop-color="#f1d9ff"/><stop offset="0.500" stop-color="#fdd8ff"/><stop offset="0.571" stop-color="#ffcff5"/><stop offset="0.643" stop-color="#ffc5e9"/><stop offset="0.714" stop-color="#ffbcdf"/><stop offset="0.786" stop-color="#ffb3d5"/><stop offset="0.857" stop-color="#ffabcc"/><stop offset="0.929" stop-color="#ffa4c4"/><stop offset="1.000" stop-color="#ff9dbc"/></linearGradient><linearGradient id="c56" x1="0" x2="1" y1="0" y2="0"><stop offset="0.000" stop-color="#acd9ff"/><stop offset="0.071" stop-color="#b7d9ff"/><stop offset="0.143" stop-color="#c2d9ff"/><stop offset="0.214" stop-color="#ced8ff"/><stop offset="0.286" stop-color="#d9d8ff"/><stop offset="0.357" stop-color="#e5d7ff"/><stop offset="0.429" stop-color="#f1d7ff"/><stop offset="0.500" stop-color="#fdd7ff"/><stop offset="0.571" stop-color="#ffcef5"/><stop offset="0.643" stop-color="#ffc4ea"/><stop offset="0.714" stop-color="#ffbbdf"/><stop offset="0.786" stop-color="#ffb2d5"/><stop offset="0.857" stop-color="#ffaacc"/><stop offset="0.929" stop-color="#ffa3c4"/><stop offset="1.000" stop-color="#ff9cbc"/></linearGradient><linearGradient id="c57" x1="0" x2="1" y1="0" y2="0"><stop offset="0.000" stop-color="#add8ff"/><stop offset="0.071" stop-color="#b7d8ff"/><stop offset="0.143" stop-color="#c2d7ff"/><stop offset="0.214" stop-color="#ced7ff"/><stop offset="0.286" stop-color="#d9d6ff"/><stop offset="0.357" stop-color="#e5d6ff"/><stop offset="0.429" stop-color="#f1d5ff"/><stop offset="0.500" stop-color="#fdd5ff"/><stop offset="0.571" stop-color="#ffccf5"/><stop offset="0.643" stop-color="#ffc2ea"/><stop offset="0.714" stop-color="#ffb9df"/><stop offset="0.786" stop-color="#ffb1d6"/><stop offset="0.857" stop-color="#ffa9cd"/><stop offset="0.929" stop-color="#ffa1c4"/><stop offset="1.000" stop-color="#ff9abc"/></linearGradient><linearGradient id="c58" x1="0" x2="1" y1="0" y2="0"><stop offset="0.000" stop-color="#add6ff"/><stop offset="0.071" stop-color="#b7d6ff"/><stop offset="0.143" stop-color="#c2d6ff"/><stop offset="0.214" stop-color="#ced5ff"/><stop offset="0.286" stop-color="#d9d5ff"/><stop offset="0.357" stop-color="#e5d4ff"/><stop offset="0.429" stop-color="#f1d4ff"/><stop offset="0.500" stop-color="#fdd3ff"/><stop offset="0.571" stop-color="#ffcbf5"/><stop offset="0.643" stop-color="#ffc1ea"/><stop offset="0.714" stop-color="#ffb8e0"/><stop offset="0.786" stop-color="#ffb0d6"/><stop offset="0.857" stop-color="#ffa8cd"/><stop offset="0.929" stop-color="#ffa0c4"/><stop offset="1.000" stop-color="#ff99bc"/></linearGradient><linearGradient id="c59" x1="0" x2="1" y1="0" y2="0"><stop offset="0.000" stop-color="#add5ff"/><stop offset="0.071" stop-color="#b8d5ff"/><stop offset="0.143" stop-color="#c2d4ff"/><stop offset="0.214" stop-color="#ced4ff"/><stop offset="0.286" stop-color="#d9d3ff"/><stop offset="0.357" stop-color="#e5d3ff"/><stop offset="0.429" stop-color="#f1d2ff"/><stop offset="0.500" stop-color="#fdd2ff"/><stop offset="0.571" stop-color="#ffc9f5"/><stop offset="0.643" stop-color="#ffc0ea"/><stop offset="0.714" stop-color="#ffb7e0"/><stop offset="0.786" stop-color="#ffaed6"/><stop offset="0.857" stop-color="#ffa7cd"/><stop offset="0.929" stop-color="#ff9fc4"/><stop offset="1.000" stop-color="#ff98bc"/></linearGradient><linearGradient id="c60" x1="0" x2="1" y1="0" y2="0"><stop offset="0.000" stop-color="#add3ff"/><stop offset="0.071" stop-color="#b8d3ff"/><stop offset="0.143" stop-color="#c3d3ff"/><stop offset="0.214" stop-color="#ced2ff"/><stop offset="0.286" stop-color="#d9d2ff"/><stop offset="0.357" stop-color="#e5d1ff"/><stop offset="0.429" stop-color="#f1d1ff"/><stop offset="0.500" stop-color="#fdd0ff"/><stop offset="0.571" stop-color="#ffc8f5"/><stop offset="0.643" stop-color="#ffbeea"/><stop offset="0.714" stop-color="#ffb5e0"/><stop offset="0.786" stop-color="#ffadd6"/><stop offset="0.857" stop-color="#ffa5cd"/><stop offset="0.929" stop-color="#ff9ec5"/><stop offset="1.000" stop-color="#ff97bd"/></linearGradient><linearGradient id="c61" x1="0" x2="1" y1="0" y2="0"><stop offset="0.000" stop-color="#add2ff"/><stop offset="0.071" stop-color="#b8d2ff"/><stop offset="0.143" stop-color="#c3d1ff"/><stop offset="0.214" stop-color="#ced1ff"/><stop offset="0.286" stop-color="#d9d0ff"/><stop offset="0.357" stop-color="#e5d0ff"/><stop offset="0.429" stop-color="#f1cfff"/><stop offset="0.500" stop-color="#fdcfff"/><stop offset="0.571" stop-color="#ffc6f5"/><stop offset="0.643" stop-color="#ffbdea"/><stop offset="0.714" stop-color="#ffb4e0"/><stop offset="0.786" stop-color="#ffacd6"/><stop offset="0.857" stop-color="#ffa4cd"/><stop offset="0.929" stop-color="#ff9dc5"/><stop offset="1.000" stop-color="#ff96bd"/></linearGradient><linearGradient id="c62" x1="0" x2="1" y1="0" y2="0"><stop offset="0.000" stop-color="#add1ff"/><stop offset="0.071" stop-color="#b8d0ff"/><stop offset="0.143" stop-color="#c3d0ff"/><stop offset="0.214" stop-color="#cecfff"/><stop offset="0.286" stop-color="#d9cfff"/><stop offset="0.357" stop-color="#e5ceff"/><stop offset="0.429" stop-color="#f0ceff"/><stop offset="0.500" stop-color="#fccdff"/><stop offset="0.571" stop-color="#ffc5f6"/><stop offset="0.643" stop-color="#ffbceb"/><stop offset="0.714" stop-color="#ffb3e0"/><stop offset="0.786" stop-color="#ffabd7"/><stop offset="0.857" stop-color="#ffa3cd"/><stop offset="0.929" stop-color="#ff9cc5"/><stop offset="1.000" stop-color="#ff95bd"/></linearGradient><linearGradient id="c63" x1="0" x2="1" y1="0" y2="0"><stop offset="0.000" stop-color="#adcfff"/><stop offset="0.071" stop-color="#b8cfff"/><stop offset="0.143" stop-color="#c3ceff"/><stop offset="0.214" stop-color="#ceceff"/><stop offset="0.286" stop-color="#d9cdff"/><stop offset="0.357" stop-color="#e5cdff"/><stop offset="0.429" stop-color="#f0ccff"/><stop offset="0.500" stop-color="#fcccff"/><stop offset="0.571" stop-color="#ffc4f6"/><stop offset="0.643" stop-color="#ffbaeb"/><stop offset="0.714" stop-color="#ffb2e0"/><stop offset="0.786" stop-color="#ffaad7"/><stop offset="0.857" stop-color="#ffa2ce"/><stop offset="0.929" stop-color="#ff9bc5"/><stop offset="1.000" stop-color="#ff94bd"/></linearGradient><linearGradient id="c64" x1="0" x2="1" y1="0" y2="0"><stop offset="0.000" stop-color="#adceff"/><stop offset="0.071" stop-color="#b8cdff"/><stop offset="0.143" stop-color="#c3cdff"/><stop offset="0.214" stop-color="#ceccff"/><stop offset="0.286" stop-color="#d9ccff"/><stop offset="0.357" stop-color="#e5cbff"/><stop offset="0.429" stop-color="#f0cbff"/><stop offset="0.500" stop-color="#fccaff"/><stop offset="0.571" stop-color="#ffc2f6"/><stop offset="0.643" stop-color="#ffb9eb"/><stop offset="0.714" stop-color="#ffb0e1"/><stop offset="0.786" stop-color="#ffa8d7"/><stop offset="0.857" stop-color="#ffa1ce"/><stop offset="0.929" stop-color="#ff9ac5"/><stop offset="1.000" stop-color="#ff93bd"/></linearGradient><linearGradient id="c65" x1="0" x2="1" y1="0" y2="0"><stop offset="0.000" stop-color="#adccff"/><stop offset="0.071" stop-color="#b8ccff"/><stop offset="0.143" stop-color="#c3cbff"/><stop offset="0.214" stop-color="#cecbff"/><stop offset="0.286" stop-color="#d9caff"/><stop offset="0.357" stop-color="#e4caff"/><stop offset="0.429" stop-color="#f0c9ff"/><stop offset="0.500" stop-color="#fcc9ff"/><stop offset="0.571" stop-color="#ffc1f6"/><stop offset="0.643" stop-color="#ffb8eb"/><stop offset="0.714" stop-color="#ffafe1"/><stop offset="0.786" stop-color="#ffa7d7"/><stop offset="0.857" stop-color="#ffa0ce"/><stop offset="0.929" stop-color="#ff99c6"/><stop offset="1.000" stop-color="#ff92be"/></linearGradient><clipPath id="cieclip"><rect x="428.0" y="828.0" width="275.0" height="198.0"/></clipPath></defs><rect x="428.0" y="828.00" width="275.00" height="3.00" fill="url(#c0)" shape-rendering="crispEdges"/><rect x="428.0" y="831.00" width="275.00" height="3.00" fill="url(#c1)" shape-rendering="crispEdges"/><rect x="428.0" y="834.00" width="275.00" height="3.00" fill="url(#c2)" shape-rendering="crispEdges"/><rect x="428.0" y="837.00" width="275.00" height="3.00" fill="url(#c3)" shape-rendering="crispEdges"/><rect x="428.0" y="840.00" width="275.00" height="3.00" fill="url(#c4)" shape-rendering="crispEdges"/><rect x="428.0" y="843.00" width="275.00" height="3.00" fill="url(#c5)" shape-rendering="crispEdges"/><rect x="428.0" y="846.00" width="275.00" height="3.00" fill="url(#c6)" shape-rendering="crispEdges"/><rect x="428.0" y="849.00" width="275.00" height="3.00" fill="url(#c7)" shape-rendering="crispEdges"/><rect x="428.0" y="852.00" width="275.00" height="3.00" fill="url(#c8)" shape-rendering="crispEdges"/><rect x="428.0" y="855.00" width="275.00" height="3.00" fill="url(#c9)" shape-rendering="crispEdges"/><rect x="428.0" y="858.00" width="275.00" height="3.00" fill="url(#c10)" shape-rendering="crispEdges"/><rect x="428.0" y="861.00" width="275.00" height="3.00" fill="url(#c11)" shape-rendering="crispEdges"/><rect x="428.0" y="864.00" width="275.00" height="3.00" fill="url(#c12)" shape-rendering="crispEdges"/><rect x="428.0" y="867.00" width="275.00" height="3.00" fill="url(#c13)" shape-rendering="crispEdges"/><rect x="428.0" y="870.00" width="275.00" height="3.00" fill="url(#c14)" shape-rendering="crispEdges"/><rect x="428.0" y="873.00" width="275.00" height="3.00" fill="url(#c15)" shape-rendering="crispEdges"/><rect x="428.0" y="876.00" width="275.00" height="3.00" fill="url(#c16)" shape-rendering="crispEdges"/><rect x="428.0" y="879.00" width="275.00" height="3.00" fill="url(#c17)" shape-rendering="crispEdges"/><rect x="428.0" y="882.00" width="275.00" height="3.00" fill="url(#c18)" shape-rendering="crispEdges"/><rect x="428.0" y="885.00" width="275.00" height="3.00" fill="url(#c19)" shape-rendering="crispEdges"/><rect x="428.0" y="888.00" width="275.00" height="3.00" fill="url(#c20)" shape-rendering="crispEdges"/><rect x="428.0" y="891.00" width="275.00" height="3.00" fill="url(#c21)" shape-rendering="crispEdges"/><rect x="428.0" y="894.00" width="275.00" height="3.00" fill="url(#c22)" shape-rendering="crispEdges"/><rect x="428.0" y="897.00" width="275.00" height="3.00" fill="url(#c23)" shape-rendering="crispEdges"/><rect x="428.0" y="900.00" width="275.00" height="3.00" fill="url(#c24)" shape-rendering="crispEdges"/><rect x="428.0" y="903.00" width="275.00" height="3.00" fill="url(#c25)" shape-rendering="crispEdges"/><rect x="428.0" y="906.00" width="275.00" height="3.00" fill="url(#c26)" shape-rendering="crispEdges"/><rect x="428.0" y="909.00" width="275.00" height="3.00" fill="url(#c27)" shape-rendering="crispEdges"/><rect x="428.0" y="912.00" width="275.00" height="3.00" fill="url(#c28)" shape-rendering="crispEdges"/><rect x="428.0" y="915.00" width="275.00" height="3.00" fill="url(#c29)" shape-rendering="crispEdges"/><rect x="428.0" y="918.00" width="275.00" height="3.00" fill="url(#c30)" shape-rendering="crispEdges"/><rect x="428.0" y="921.00" width="275.00" height="3.00" fill="url(#c31)" shape-rendering="crispEdges"/><rect x="428.0" y="924.00" width="275.00" height="3.00" fill="url(#c32)" shape-rendering="crispEdges"/><rect x="428.0" y="927.00" width="275.00" height="3.00" fill="url(#c33)" shape-rendering="crispEdges"/><rect x="428.0" y="930.00" width="275.00" height="3.00" fill="url(#c34)" shape-rendering="crispEdges"/><rect x="428.0" y="933.00" width="275.00" height="3.00" fill="url(#c35)" shape-rendering="crispEdges"/><rect x="428.0" y="936.00" width="275.00" height="3.00" fill="url(#c36)" shape-rendering="crispEdges"/><rect x="428.0" y="939.00" width="275.00" height="3.00" fill="url(#c37)" shape-rendering="crispEdges"/><rect x="428.0" y="942.00" width="275.00" height="3.00" fill="url(#c38)" shape-rendering="crispEdges"/><rect x="428.0" y="945.00" width="275.00" height="3.00" fill="url(#c39)" shape-rendering="crispEdges"/><rect x="428.0" y="948.00" width="275.00" height="3.00" fill="url(#c40)" shape-rendering="crispEdges"/><rect x="428.0" y="951.00" width="275.00" height="3.00" fill="url(#c41)" shape-rendering="crispEdges"/><rect x="428.0" y="954.00" width="275.00" height="3.00" fill="url(#c42)" shape-rendering="crispEdges"/><rect x="428.0" y="957.00" width="275.00" height="3.00" fill="url(#c43)" shape-rendering="crispEdges"/><rect x="428.0" y="960.00" width="275.00" height="3.00" fill="url(#c44)" shape-rendering="crispEdges"/><rect x="428.0" y="963.00" width="275.00" height="3.00" fill="url(#c45)" shape-rendering="crispEdges"/><rect x="428.0" y="966.00" width="275.00" height="3.00" fill="url(#c46)" shape-rendering="crispEdges"/><rect x="428.0" y="969.00" width="275.00" height="3.00" fill="url(#c47)" shape-rendering="crispEdges"/><rect x="428.0" y="972.00" width="275.00" height="3.00" fill="url(#c48)" shape-rendering="crispEdges"/><rect x="428.0" y="975.00" width="275.00" height="3.00" fill="url(#c49)" shape-rendering="crispEdges"/><rect x="428.0" y="978.00" width="275.00" height="3.00" fill="url(#c50)" shape-rendering="crispEdges"/><rect x="428.0" y="981.00" width="275.00" height="3.00" fill="url(#c51)" shape-rendering="crispEdges"/><rect x="428.0" y="984.00" width="275.00" height="3.00" fill="url(#c52)" shape-rendering="crispEdges"/><rect x="428.0" y="987.00" width="275.00" height="3.00" fill="url(#c53)" shape-rendering="crispEdges"/><rect x="428.0" y="990.00" width="275.00" height="3.00" fill="url(#c54)" shape-rendering="crispEdges"/><rect x="428.0" y="993.00" width="275.00" height="3.00" fill="url(#c55)" shape-rendering="crispEdges"/><rect x="428.0" y="996.00" width="275.00" height="3.00" fill="url(#c56)" shape-rendering="crispEdges"/><rect x="428.0" y="999.00" width="275.00" height="3.00" fill="url(#c57)" shape-rendering="crispEdges"/><rect x="428.0" y="1002.00" width="275.00" height="3.00" fill="url(#c58)" shape-rendering="crispEdges"/><rect x="428.0" y="1005.00" width="275.00" height="3.00" fill="url(#c59)" shape-rendering="crispEdges"/><rect x="428.0" y="1008.00" width="275.00" height="3.00" fill="url(#c60)" shape-rendering="crispEdges"/><rect x="428.0" y="1011.00" width="275.00" height="3.00" fill="url(#c61)" shape-rendering="crispEdges"/><rect x="428.0" y="1014.00" width="275.00" height="3.00" fill="url(#c62)" shape-rendering="crispEdges"/><rect x="428.0" y="1017.00" width="275.00" height="3.00" fill="url(#c63)" shape-rendering="crispEdges"/><rect x="428.0" y="1020.00" width="275.00" height="3.00" fill="url(#c64)" shape-rendering="crispEdges"/><rect x="428.0" y="1023.00" width="275.00" height="3.00" fill="url(#c65)" shape-rendering="crispEdges"/><rect x="428.4" y="828.3" width="274.2" height="197.9" fill="none" stroke="#a8a8a8" stroke-width="1.5"/><path d="M827.4 794.4L808.6 804.1L790.7 813.6L773.6 822.8L757.2 831.9L741.6 840.7L726.5 849.3L712.2 857.7L698.4 865.9L685.1 873.9L672.5 881.7L660.3 889.3L648.6 896.7L637.3 903.9L626.5 910.9L616.1 917.8L606.1 924.4L596.5 930.9L587.2 937.3L578.2 943.4L569.6 949.4L561.2 955.2L553.2 960.9L545.4 966.5L537.9 971.9L530.7 977.1L523.7 982.3L516.9 987.2L510.4 992.1L504.0 996.9L497.9 1001.5L491.9 1006.0L486.1 1010.4L480.6 1014.7L475.1 1018.9L469.9 1023.0L464.8 1027.0L459.8 1030.8L455.0 1034.6L450.3 1038.4L445.8 1042.0L441.4 1045.5L437.1 1049.0L432.9 1052.3L428.8 1055.6L424.9 1058.9L421.0 1062.0L417.3 1065.1L413.6 1068.1L410.1 1071.0L406.6 1073.9L403.2 1076.7L399.9 1079.5L396.7 1082.2L393.6 1084.8L390.5 1087.4L387.5 1089.9L384.6 1092.4L381.8 1094.8L379.0 1097.2L376.3 1099.5L373.6 1101.8L371.0 1104.1L368.5 1106.2L366.0 1108.4L363.6 1110.5L361.2 1112.6L358.9 1114.6L356.6 1116.6L354.4 1118.5L352.3 1120.4L350.1 1122.3L348.1 1124.1L346.0 1125.9L344.0 1127.7L342.1 1129.4" stroke="#000" stroke-width="3.1" fill="none" clip-path="url(#cieclip)"/><rect x="557.0" y="919.4" width="14.8" height="14.8" fill="#fff" stroke="#000" stroke-width="1.5"/><circle cx="478.6" cy="934.2" r="4.7" fill="#181818" stroke="#111" stroke-width="1"/><circle cx="497.0" cy="906.5" r="4.7" fill="#333" stroke="#111" stroke-width="1"/><circle cx="505.0" cy="905.0" r="4.7" fill="#4d4d4d" stroke="#111" stroke-width="1"/><circle cx="502.5" cy="907.5" r="4.7" fill="#666" stroke="#111" stroke-width="1"/><circle cx="503.0" cy="909.8" r="4.7" fill="#808080" stroke="#111" stroke-width="1"/><circle cx="502.0" cy="912.5" r="4.7" fill="#999" stroke="#111" stroke-width="1"/><circle cx="501.5" cy="914.8" r="4.7" fill="#b3b3b3" stroke="#111" stroke-width="1"/><circle cx="500.5" cy="917.2" r="4.7" fill="#ccc" stroke="#111" stroke-width="1"/><circle cx="498.8" cy="919.7" r="4.7" fill="#e6e6e6" stroke="#111" stroke-width="1"/><circle cx="502.0" cy="925.2" r="4.7" fill="#fff" stroke="#111" stroke-width="1"/><path d="M421.5 843.4H427.6" stroke="#e0e0e0" stroke-width="1.5" fill="none"/><text x="420.40" y="849.70" font-size="15.3" fill="#e6e6e6" text-anchor="end" textLength="32.50" lengthAdjust="spacingAndGlyphs">0,35</text><path d="M421.5 884.2H427.6" stroke="#e0e0e0" stroke-width="1.5" fill="none"/><text x="420.40" y="890.50" font-size="15.3" fill="#e6e6e6" text-anchor="end" textLength="32.50" lengthAdjust="spacingAndGlyphs">0,34</text><path d="M421.5 923.7H427.6" stroke="#e0e0e0" stroke-width="1.5" fill="none"/><text x="420.40" y="930.00" font-size="15.3" fill="#e6e6e6" text-anchor="end" textLength="32.50" lengthAdjust="spacingAndGlyphs">0,33</text><path d="M421.5 962.25H427.6" stroke="#e0e0e0" stroke-width="1.5" fill="none"/><text x="420.40" y="968.55" font-size="15.3" fill="#e6e6e6" text-anchor="end" textLength="32.50" lengthAdjust="spacingAndGlyphs">0,32</text><path d="M421.5 1001.3H427.6" stroke="#e0e0e0" stroke-width="1.5" fill="none"/><text x="420.40" y="1007.60" font-size="15.3" fill="#e6e6e6" text-anchor="end" textLength="32.50" lengthAdjust="spacingAndGlyphs">0,31</text><path d="M439.8 1027V1033" stroke="#e0e0e0" stroke-width="1.5" fill="none"/><text x="439.80" y="1049.60" font-size="15.3" fill="#e6e6e6" text-anchor="middle">0,29</text><path d="M494.2 1027V1033" stroke="#e0e0e0" stroke-width="1.5" fill="none"/><text x="494.20" y="1049.60" font-size="15.3" fill="#e6e6e6" text-anchor="middle">0,3</text><path d="M548.8 1027V1033" stroke="#e0e0e0" stroke-width="1.5" fill="none"/><text x="548.80" y="1049.60" font-size="15.3" fill="#e6e6e6" text-anchor="middle">0,31</text><path d="M603.6 1027V1033" stroke="#e0e0e0" stroke-width="1.5" fill="none"/><text x="603.60" y="1049.60" font-size="15.3" fill="#e6e6e6" text-anchor="middle">0,32</text><path d="M658.2 1027V1033" stroke="#e0e0e0" stroke-width="1.5" fill="none"/><text x="658.20" y="1049.60" font-size="15.3" fill="#e6e6e6" text-anchor="middle">0,33</text></svg>
<div class="a" style="left:722.0px;top:801.0px;width:1114.5px;height:240.6px;background:#080808"></div>
<div class="a" style="left:723.5px;top:802.5px;width:1111.5px;height:31.5px;background:linear-gradient(#2b2b2b,#303030 48%,#161616 52%,#191919)"></div>
<div class="a" style="left:723.5px;top:833.90px;width:1111.5px;height:30.03px;background:linear-gradient(#454545,#3e3e3e)"></div>
<div class="a" style="left:723.5px;top:863.63px;width:1111.5px;height:30.03px;background:linear-gradient(#848484,#7b7b7b)"></div>
<div class="a" style="left:723.5px;top:893.36px;width:1111.5px;height:30.03px;background:linear-gradient(#454545,#3e3e3e)"></div>
<div class="a" style="left:723.5px;top:923.09px;width:1111.5px;height:30.03px;background:linear-gradient(#848484,#7b7b7b)"></div>
<div class="a" style="left:723.5px;top:952.82px;width:1111.5px;height:30.03px;background:linear-gradient(#454545,#3e3e3e)"></div>
<div class="a" style="left:723.5px;top:982.55px;width:1111.5px;height:30.03px;background:linear-gradient(#848484,#7b7b7b)"></div>
<div class="a" style="left:723.5px;top:1012.28px;width:1111.5px;height:30.03px;background:linear-gradient(#454545,#3e3e3e)"></div>
<div class="t " style="top:809.00px;font-size:15.6px;line-height:21px;color:#fff;left:545.20px;width:800px;text-align:center;transform-origin:50% 50%;transform:scaleX(1.0700);-webkit-text-stroke:.22px #fff;">0</div>
<div class="t " style="top:809.00px;font-size:15.6px;line-height:21px;color:#fff;left:634.50px;width:800px;text-align:center;transform-origin:50% 50%;transform:scaleX(1.0700);-webkit-text-stroke:.22px #fff;">10</div>
<div class="t " style="top:809.00px;font-size:15.6px;line-height:21px;color:#fff;left:718.87px;width:800px;text-align:center;transform-origin:50% 50%;transform:scaleX(1.0700);-webkit-text-stroke:.22px #fff;">20</div>
<div class="t " style="top:809.00px;font-size:15.6px;line-height:21px;color:#fff;left:803.24px;width:800px;text-align:center;transform-origin:50% 50%;transform:scaleX(1.0700);-webkit-text-stroke:.22px #fff;">30</div>
<div class="t " style="top:809.00px;font-size:15.6px;line-height:21px;color:#fff;left:887.61px;width:800px;text-align:center;transform-origin:50% 50%;transform:scaleX(1.0700);-webkit-text-stroke:.22px #fff;">40</div>
<div class="t " style="top:809.00px;font-size:15.6px;line-height:21px;color:#fff;left:971.98px;width:800px;text-align:center;transform-origin:50% 50%;transform:scaleX(1.0700);-webkit-text-stroke:.22px #fff;">50</div>
<div class="t " style="top:809.00px;font-size:15.6px;line-height:21px;color:#fff;left:1056.35px;width:800px;text-align:center;transform-origin:50% 50%;transform:scaleX(1.0700);-webkit-text-stroke:.22px #fff;">60</div>
<div class="t " style="top:809.00px;font-size:15.6px;line-height:21px;color:#fff;left:1140.72px;width:800px;text-align:center;transform-origin:50% 50%;transform:scaleX(1.0700);-webkit-text-stroke:.22px #fff;">70</div>
<div class="t " style="top:809.00px;font-size:15.6px;line-height:21px;color:#fff;left:1225.09px;width:800px;text-align:center;transform-origin:50% 50%;transform:scaleX(1.0700);-webkit-text-stroke:.22px #fff;">80</div>
<div class="t " style="top:809.00px;font-size:15.6px;line-height:21px;color:#fff;left:1309.46px;width:800px;text-align:center;transform-origin:50% 50%;transform:scaleX(1.0700);-webkit-text-stroke:.22px #fff;">90</div>
<div class="t " style="top:809.00px;font-size:15.6px;line-height:21px;color:#fff;left:1393.83px;width:800px;text-align:center;transform-origin:50% 50%;transform:scaleX(1.0700);-webkit-text-stroke:.22px #fff;">100</div>
<div class="t " style="top:837.00px;font-size:18.67px;line-height:25px;color:#fff;font-weight:700;left:737.40px;transform-origin:0 50%;transform:scaleX(0.9311);">x: CIE31</div>
<div class="t " style="top:837.00px;font-size:18.67px;line-height:25px;color:#fff;left:902.20px;transform-origin:0 50%;transform:scaleX(0.9450);">0,269</div>
<div class="t " style="top:837.00px;font-size:18.67px;line-height:25px;color:#fff;left:996.90px;transform-origin:0 50%;transform:scaleX(0.9450);">0,297</div>
<div class="t " style="top:837.00px;font-size:18.67px;line-height:25px;color:#fff;left:1081.27px;transform-origin:0 50%;transform:scaleX(0.9450);">0,301</div>
<div class="t " style="top:837.00px;font-size:18.67px;line-height:25px;color:#fff;left:1165.64px;transform-origin:0 50%;transform:scaleX(0.9450);">0,302</div>
<div class="t " style="top:837.00px;font-size:18.67px;line-height:25px;color:#fff;left:1250.01px;transform-origin:0 50%;transform:scaleX(0.9450);">0,301</div>
<div class="t " style="top:837.00px;font-size:18.67px;line-height:25px;color:#fff;left:1334.38px;transform-origin:0 50%;transform:scaleX(0.9450);">0,302</div>
<div class="t " style="top:837.00px;font-size:18.67px;line-height:25px;color:#fff;left:1418.75px;transform-origin:0 50%;transform:scaleX(0.9450);">0,301</div>
<div class="t " style="top:837.00px;font-size:18.67px;line-height:25px;color:#fff;left:1503.12px;transform-origin:0 50%;transform:scaleX(0.9450);">0,301</div>
<div class="t " style="top:837.00px;font-size:18.67px;line-height:25px;color:#fff;left:1587.49px;transform-origin:0 50%;transform:scaleX(0.9450);">0,301</div>
<div class="t " style="top:837.00px;font-size:18.67px;line-height:25px;color:#fff;left:1671.86px;transform-origin:0 50%;transform:scaleX(0.9450);">0,301</div>
<div class="t " style="top:837.00px;font-size:18.67px;line-height:25px;color:#fff;left:1756.23px;transform-origin:0 50%;transform:scaleX(0.9450);">0,301</div>
<div class="t " style="top:867.00px;font-size:18.67px;line-height:25px;color:#eeeeee;font-weight:700;left:737.40px;transform-origin:0 50%;transform:scaleX(0.9311);">y: CIE31</div>
<div class="t " style="top:867.00px;font-size:18.67px;line-height:25px;color:#eeeeee;left:902.20px;transform-origin:0 50%;transform:scaleX(0.9450);">0,271</div>
<div class="t " style="top:867.00px;font-size:18.67px;line-height:25px;color:#eeeeee;left:996.90px;transform-origin:0 50%;transform:scaleX(0.9450);">0,327</div>
<div class="t " style="top:867.00px;font-size:18.67px;line-height:25px;color:#eeeeee;left:1081.27px;transform-origin:0 50%;transform:scaleX(0.9450);">0,334</div>
<div class="t " style="top:867.00px;font-size:18.67px;line-height:25px;color:#eeeeee;left:1165.64px;transform-origin:0 50%;transform:scaleX(0.9450);">0,334</div>
<div class="t " style="top:867.00px;font-size:18.67px;line-height:25px;color:#eeeeee;left:1250.01px;transform-origin:0 50%;transform:scaleX(0.9450);">0,334</div>
<div class="t " style="top:867.00px;font-size:18.67px;line-height:25px;color:#eeeeee;left:1334.38px;transform-origin:0 50%;transform:scaleX(0.9450);">0,333</div>
<div class="t " style="top:867.00px;font-size:18.67px;line-height:25px;color:#eeeeee;left:1418.75px;transform-origin:0 50%;transform:scaleX(0.9450);">0,332</div>
<div class="t " style="top:867.00px;font-size:18.67px;line-height:25px;color:#eeeeee;left:1503.12px;transform-origin:0 50%;transform:scaleX(0.9450);">0,332</div>
<div class="t " style="top:867.00px;font-size:18.67px;line-height:25px;color:#eeeeee;left:1587.49px;transform-origin:0 50%;transform:scaleX(0.9450);">0,331</div>
<div class="t " style="top:867.00px;font-size:18.67px;line-height:25px;color:#eeeeee;left:1671.86px;transform-origin:0 50%;transform:scaleX(0.9450);">0,330</div>
<div class="t " style="top:867.00px;font-size:18.67px;line-height:25px;color:#eeeeee;left:1756.23px;transform-origin:0 50%;transform:scaleX(0.9450);">0,329</div>
<div class="t " style="top:897.00px;font-size:18.67px;line-height:25px;color:#fff;font-weight:700;left:737.40px;transform-origin:0 50%;transform:scaleX(0.8833);">Y</div>
<div class="t " style="top:897.00px;font-size:18.67px;line-height:25px;color:#fff;left:902.20px;transform-origin:0 50%;transform:scaleX(0.9450);">0,496</div>
<div class="t " style="top:897.00px;font-size:18.67px;line-height:25px;color:#fff;left:996.90px;transform-origin:0 50%;transform:scaleX(0.9450);">3,798</div>
<div class="t " style="top:897.00px;font-size:18.67px;line-height:25px;color:#fff;left:1081.27px;transform-origin:0 50%;transform:scaleX(0.9450);">16,289</div>
<div class="t " style="top:897.00px;font-size:18.67px;line-height:25px;color:#fff;left:1165.64px;transform-origin:0 50%;transform:scaleX(0.9450);">40,127</div>
<div class="t " style="top:897.00px;font-size:18.67px;line-height:25px;color:#fff;left:1250.01px;transform-origin:0 50%;transform:scaleX(0.9450);">75,250</div>
<div class="t " style="top:897.00px;font-size:18.67px;line-height:25px;color:#fff;left:1334.38px;transform-origin:0 50%;transform:scaleX(0.9450);">125,733</div>
<div class="t " style="top:897.00px;font-size:18.67px;line-height:25px;color:#fff;left:1418.75px;transform-origin:0 50%;transform:scaleX(0.9450);">186,622</div>
<div class="t " style="top:897.00px;font-size:18.67px;line-height:25px;color:#fff;left:1503.12px;transform-origin:0 50%;transform:scaleX(0.9450);">259,509</div>
<div class="t " style="top:897.00px;font-size:18.67px;line-height:25px;color:#fff;left:1587.49px;transform-origin:0 50%;transform:scaleX(0.9450);">356,864</div>
<div class="t " style="top:897.00px;font-size:18.67px;line-height:25px;color:#fff;left:1671.86px;transform-origin:0 50%;transform:scaleX(0.9450);">468,432</div>
<div class="t " style="top:897.00px;font-size:18.67px;line-height:25px;color:#fff;left:1756.23px;transform-origin:0 50%;transform:scaleX(0.9450);">591,144</div>
<div class="t " style="top:927.00px;font-size:18.67px;line-height:25px;color:#eeeeee;font-weight:700;left:737.40px;transform-origin:0 50%;transform:scaleX(0.9729);">Target Y</div>
<div class="t " style="top:927.00px;font-size:18.67px;line-height:25px;color:#eeeeee;left:902.20px;transform-origin:0 50%;transform:scaleX(0.9450);">0,000</div>
<div class="t " style="top:927.00px;font-size:18.67px;line-height:25px;color:#eeeeee;left:996.90px;transform-origin:0 50%;transform:scaleX(0.9450);">6,106</div>
<div class="t " style="top:927.00px;font-size:18.67px;line-height:25px;color:#eeeeee;left:1081.27px;transform-origin:0 50%;transform:scaleX(0.9450);">19,570</div>
<div class="t " style="top:927.00px;font-size:18.67px;line-height:25px;color:#eeeeee;left:1165.64px;transform-origin:0 50%;transform:scaleX(0.9450);">42,723</div>
<div class="t " style="top:927.00px;font-size:18.67px;line-height:25px;color:#eeeeee;left:1250.01px;transform-origin:0 50%;transform:scaleX(0.9450);">78,544</div>
<div class="t " style="top:927.00px;font-size:18.67px;line-height:25px;color:#eeeeee;left:1334.38px;transform-origin:0 50%;transform:scaleX(0.9450);">127,605</div>
<div class="t " style="top:927.00px;font-size:18.67px;line-height:25px;color:#eeeeee;left:1418.75px;transform-origin:0 50%;transform:scaleX(0.9450);">188,307</div>
<div class="t " style="top:927.00px;font-size:18.67px;line-height:25px;color:#eeeeee;left:1503.12px;transform-origin:0 50%;transform:scaleX(0.9450);">263,178</div>
<div class="t " style="top:927.00px;font-size:18.67px;line-height:25px;color:#eeeeee;left:1587.49px;transform-origin:0 50%;transform:scaleX(0.9450);">356,949</div>
<div class="t " style="top:927.00px;font-size:18.67px;line-height:25px;color:#eeeeee;left:1671.86px;transform-origin:0 50%;transform:scaleX(0.9450);">467,771</div>
<div class="t " style="top:927.00px;font-size:18.67px;line-height:25px;color:#eeeeee;left:1756.23px;transform-origin:0 50%;transform:scaleX(0.9450);">591,144</div>
<div class="t " style="top:956.00px;font-size:18.67px;line-height:25px;color:#fff;font-weight:700;left:737.40px;transform-origin:0 50%;transform:scaleX(0.9940);">Gamma Log/Log</div>
<div class="t " style="top:956.00px;font-size:18.67px;line-height:25px;color:#fff;left:902.20px;transform-origin:0 50%;transform:scaleX(0.9450);">1,278</div>
<div class="t " style="top:956.00px;font-size:18.67px;line-height:25px;color:#fff;left:996.90px;transform-origin:0 50%;transform:scaleX(0.9450);">2,211</div>
<div class="t " style="top:956.00px;font-size:18.67px;line-height:25px;color:#fff;left:1081.27px;transform-origin:0 50%;transform:scaleX(0.9450);">2,232</div>
<div class="t " style="top:956.00px;font-size:18.67px;line-height:25px;color:#fff;left:1165.64px;transform-origin:0 50%;transform:scaleX(0.9450);">2,222</div>
<div class="t " style="top:956.00px;font-size:18.67px;line-height:25px;color:#fff;left:1250.01px;transform-origin:0 50%;transform:scaleX(0.9450);">2,250</div>
<div class="t " style="top:956.00px;font-size:18.67px;line-height:25px;color:#fff;left:1334.38px;transform-origin:0 50%;transform:scaleX(0.9450);">2,246</div>
<div class="t " style="top:956.00px;font-size:18.67px;line-height:25px;color:#fff;left:1418.75px;transform-origin:0 50%;transform:scaleX(0.9450);">2,257</div>
<div class="t " style="top:956.00px;font-size:18.67px;line-height:25px;color:#fff;left:1503.12px;transform-origin:0 50%;transform:scaleX(0.9450);">2,290</div>
<div class="t " style="top:956.00px;font-size:18.67px;line-height:25px;color:#fff;left:1587.49px;transform-origin:0 50%;transform:scaleX(0.9450);">2,262</div>
<div class="t " style="top:956.00px;font-size:18.67px;line-height:25px;color:#fff;left:1671.86px;transform-origin:0 50%;transform:scaleX(0.9450);">2,255</div>
<div class="t " style="top:956.00px;font-size:18.67px;line-height:25px;color:#fff;left:1756.23px;transform-origin:0 50%;transform:scaleX(0.9450);">2,275</div>
<div class="t " style="top:986.00px;font-size:18.67px;line-height:25px;color:#eeeeee;font-weight:700;left:737.40px;transform-origin:0 50%;transform:scaleX(0.8444);">CCT</div>
<div class="t " style="top:986.00px;font-size:18.67px;line-height:25px;color:#eeeeee;left:902.20px;transform-origin:0 50%;transform:scaleX(0.9450);">12680,000</div>
<div class="t " style="top:986.00px;font-size:18.67px;line-height:25px;color:#eeeeee;left:996.90px;transform-origin:0 50%;transform:scaleX(0.9450);">7433,000</div>
<div class="t " style="top:986.00px;font-size:18.67px;line-height:25px;color:#eeeeee;left:1081.27px;transform-origin:0 50%;transform:scaleX(0.9450);">7131,000</div>
<div class="t " style="top:986.00px;font-size:18.67px;line-height:25px;color:#eeeeee;left:1165.64px;transform-origin:0 50%;transform:scaleX(0.9450);">7058,000</div>
<div class="t " style="top:986.00px;font-size:18.67px;line-height:25px;color:#eeeeee;left:1250.01px;transform-origin:0 50%;transform:scaleX(0.9450);">7095,000</div>
<div class="t " style="top:986.00px;font-size:18.67px;line-height:25px;color:#eeeeee;left:1334.38px;transform-origin:0 50%;transform:scaleX(0.9450);">7080,000</div>
<div class="t " style="top:986.00px;font-size:18.67px;line-height:25px;color:#eeeeee;left:1418.75px;transform-origin:0 50%;transform:scaleX(0.9450);">7136,000</div>
<div class="t " style="top:986.00px;font-size:18.67px;line-height:25px;color:#eeeeee;left:1503.12px;transform-origin:0 50%;transform:scaleX(0.9450);">7114,000</div>
<div class="t " style="top:986.00px;font-size:18.67px;line-height:25px;color:#eeeeee;left:1587.49px;transform-origin:0 50%;transform:scaleX(0.9450);">7137,000</div>
<div class="t " style="top:986.00px;font-size:18.67px;line-height:25px;color:#eeeeee;left:1671.86px;transform-origin:0 50%;transform:scaleX(0.9450);">7160,000</div>
<div class="t " style="top:986.00px;font-size:18.67px;line-height:25px;color:#eeeeee;left:1756.23px;transform-origin:0 50%;transform:scaleX(0.9450);">7145,000</div>
<div class="t " style="top:1015.00px;font-size:18.67px;line-height:25px;color:#fff;font-weight:700;left:737.40px;transform-origin:0 50%;transform:scaleX(0.9725);">ΔE 2000</div>
<div class="t " style="top:1015.00px;font-size:18.67px;line-height:25px;color:#fff;left:902.20px;transform-origin:0 50%;transform:scaleX(0.9450);">0,869</div>
<div class="t " style="top:1015.00px;font-size:18.67px;line-height:25px;color:#fff;left:996.90px;transform-origin:0 50%;transform:scaleX(0.9450);">2,700</div>
<div class="t " style="top:1015.00px;font-size:18.67px;line-height:25px;color:#fff;left:1081.27px;transform-origin:0 50%;transform:scaleX(0.9450);">4,057</div>
<div class="t " style="top:1015.00px;font-size:18.67px;line-height:25px;color:#fff;left:1165.64px;transform-origin:0 50%;transform:scaleX(0.9450);">4,723</div>
<div class="t " style="top:1015.00px;font-size:18.67px;line-height:25px;color:#fff;left:1250.01px;transform-origin:0 50%;transform:scaleX(0.9450);">5,625</div>
<div class="t " style="top:1015.00px;font-size:18.67px;line-height:25px;color:#fff;left:1334.38px;transform-origin:0 50%;transform:scaleX(0.9450);">6,197</div>
<div class="t " style="top:1015.00px;font-size:18.67px;line-height:25px;color:#fff;left:1418.75px;transform-origin:0 50%;transform:scaleX(0.9450);">6,817</div>
<div class="t " style="top:1015.00px;font-size:18.67px;line-height:25px;color:#fff;left:1503.12px;transform-origin:0 50%;transform:scaleX(0.9450);">7,387</div>
<div class="t " style="top:1015.00px;font-size:18.67px;line-height:25px;color:#fff;left:1587.49px;transform-origin:0 50%;transform:scaleX(0.9450);">7,816</div>
<div class="t " style="top:1015.00px;font-size:18.67px;line-height:25px;color:#fff;left:1671.86px;transform-origin:0 50%;transform:scaleX(0.9450);">8,176</div>
<div class="t " style="top:1015.00px;font-size:18.67px;line-height:25px;color:#fff;left:1756.23px;transform-origin:0 50%;transform:scaleX(0.9450);">7,840</div>
<div class="a" style="left:0;top:1113px;width:1920px;height:53px;background:linear-gradient(#464646,#363636 45%,#222)"></div>
<div class="a" style="left:0;top:1113px;width:1402px;height:53px;background:#2e2e2e"></div>
<div class="a" style="left:1.70px;top:1113px;width:125.40px;height:51.2px;border-radius:4px;background:linear-gradient(#a8a8a8 0,#909090 5%,#808080 22%,#6c6c6c 62%,#5c5c5c 100%);border:1px solid;border-color:#a4a4a4 #8c8c8c #525252 #8c8c8c"></div>
<div class="a" style="left:5.80px;top:1117.4px;width:117.40px;height:30.4px;border-radius:3px;background:#000000;box-shadow:0 1px 0 rgba(255,255,255,.18),inset 0 1px 1px rgba(0,0,0,.4)"></div>
<div class="t " style="top:1150.00px;font-size:9.6px;line-height:13px;color:#1c1c1c;font-weight:700;left:-335.55px;width:800px;text-align:center;transform-origin:50% 50%;">0</div>
<div class="a" style="left:129.00px;top:1113px;width:125.40px;height:51.2px;border-radius:4px;background:linear-gradient(#a8a8a8 0,#909090 5%,#808080 22%,#6c6c6c 62%,#5c5c5c 100%);border:1px solid;border-color:#a4a4a4 #8c8c8c #525252 #8c8c8c"></div>
<div class="a" style="left:133.10px;top:1117.4px;width:117.40px;height:30.4px;border-radius:3px;background:#1a1a1a;box-shadow:0 1px 0 rgba(255,255,255,.18),inset 0 1px 1px rgba(0,0,0,.4)"></div>
<div class="t " style="top:1150.00px;font-size:9.6px;line-height:13px;color:#1c1c1c;font-weight:700;left:-208.25px;width:800px;text-align:center;transform-origin:50% 50%;">10</div>
<div class="a" style="left:256.30px;top:1113px;width:125.40px;height:51.2px;border-radius:4px;background:linear-gradient(#a8a8a8 0,#909090 5%,#808080 22%,#6c6c6c 62%,#5c5c5c 100%);border:1px solid;border-color:#a4a4a4 #8c8c8c #525252 #8c8c8c"></div>
<div class="a" style="left:260.40px;top:1117.4px;width:117.40px;height:30.4px;border-radius:3px;background:#333333;box-shadow:0 1px 0 rgba(255,255,255,.18),inset 0 1px 1px rgba(0,0,0,.4)"></div>
<div class="t " style="top:1150.00px;font-size:9.6px;line-height:13px;color:#1c1c1c;font-weight:700;left:-80.95px;width:800px;text-align:center;transform-origin:50% 50%;">20</div>
<div class="a" style="left:383.60px;top:1113px;width:125.40px;height:51.2px;border-radius:4px;background:linear-gradient(#a8a8a8 0,#909090 5%,#808080 22%,#6c6c6c 62%,#5c5c5c 100%);border:1px solid;border-color:#a4a4a4 #8c8c8c #525252 #8c8c8c"></div>
<div class="a" style="left:387.70px;top:1117.4px;width:117.40px;height:30.4px;border-radius:3px;background:#4d4d4d;box-shadow:0 1px 0 rgba(255,255,255,.18),inset 0 1px 1px rgba(0,0,0,.4)"></div>
<div class="t " style="top:1150.00px;font-size:9.6px;line-height:13px;color:#1c1c1c;font-weight:700;left:46.35px;width:800px;text-align:center;transform-origin:50% 50%;">30</div>
<div class="a" style="left:510.90px;top:1113px;width:125.40px;height:51.2px;border-radius:4px;background:linear-gradient(#a8a8a8 0,#909090 5%,#808080 22%,#6c6c6c 62%,#5c5c5c 100%);border:1px solid;border-color:#a4a4a4 #8c8c8c #525252 #8c8c8c"></div>
<div class="a" style="left:515.00px;top:1117.4px;width:117.40px;height:30.4px;border-radius:3px;background:#666666;box-shadow:0 1px 0 rgba(255,255,255,.18),inset 0 1px 1px rgba(0,0,0,.4)"></div>
<div class="t " style="top:1150.00px;font-size:9.6px;line-height:13px;color:#1c1c1c;font-weight:700;left:173.65px;width:800px;text-align:center;transform-origin:50% 50%;">40</div>
<div class="a" style="left:638.20px;top:1113px;width:125.40px;height:51.2px;border-radius:4px;background:linear-gradient(#a8a8a8 0,#909090 5%,#808080 22%,#6c6c6c 62%,#5c5c5c 100%);border:1px solid;border-color:#a4a4a4 #8c8c8c #525252 #8c8c8c"></div>
<div class="a" style="left:642.30px;top:1117.4px;width:117.40px;height:30.4px;border-radius:3px;background:#808080;box-shadow:0 1px 0 rgba(255,255,255,.18),inset 0 1px 1px rgba(0,0,0,.4)"></div>
<div class="t " style="top:1150.00px;font-size:9.6px;line-height:13px;color:#1c1c1c;font-weight:700;left:300.95px;width:800px;text-align:center;transform-origin:50% 50%;">50</div>
<div class="a" style="left:765.50px;top:1113px;width:125.40px;height:51.2px;border-radius:4px;background:linear-gradient(#a8a8a8 0,#909090 5%,#808080 22%,#6c6c6c 62%,#5c5c5c 100%);border:1px solid;border-color:#a4a4a4 #8c8c8c #525252 #8c8c8c"></div>
<div class="a" style="left:769.60px;top:1117.4px;width:117.40px;height:30.4px;border-radius:3px;background:#999999;box-shadow:0 1px 0 rgba(255,255,255,.18),inset 0 1px 1px rgba(0,0,0,.4)"></div>
<div class="t " style="top:1150.00px;font-size:9.6px;line-height:13px;color:#1c1c1c;font-weight:700;left:428.25px;width:800px;text-align:center;transform-origin:50% 50%;">60</div>
<div class="a" style="left:892.80px;top:1113px;width:125.40px;height:51.2px;border-radius:4px;background:linear-gradient(#a8a8a8 0,#909090 5%,#808080 22%,#6c6c6c 62%,#5c5c5c 100%);border:1px solid;border-color:#a4a4a4 #8c8c8c #525252 #8c8c8c"></div>
<div class="a" style="left:896.90px;top:1117.4px;width:117.40px;height:30.4px;border-radius:3px;background:#b3b3b3;box-shadow:0 1px 0 rgba(255,255,255,.18),inset 0 1px 1px rgba(0,0,0,.4)"></div>
<div class="t " style="top:1150.00px;font-size:9.6px;line-height:13px;color:#1c1c1c;font-weight:700;left:555.55px;width:800px;text-align:center;transform-origin:50% 50%;">70</div>
<div class="a" style="left:1020.10px;top:1113px;width:125.40px;height:51.2px;border-radius:4px;background:linear-gradient(#a8a8a8 0,#909090 5%,#808080 22%,#6c6c6c 62%,#5c5c5c 100%);border:1px solid;border-color:#a4a4a4 #8c8c8c #525252 #8c8c8c"></div>
<div class="a" style="left:1024.20px;top:1117.4px;width:117.40px;height:30.4px;border-radius:3px;background:#cccccc;box-shadow:0 1px 0 rgba(255,255,255,.18),inset 0 1px 1px rgba(0,0,0,.4)"></div>
<div class="t " style="top:1150.00px;font-size:9.6px;line-height:13px;color:#1c1c1c;font-weight:700;left:682.85px;width:800px;text-align:center;transform-origin:50% 50%;">80</div>
<div class="a" style="left:1147.40px;top:1113px;width:125.40px;height:51.2px;border-radius:4px;background:linear-gradient(#a8a8a8 0,#909090 5%,#808080 22%,#6c6c6c 62%,#5c5c5c 100%);border:1px solid;border-color:#a4a4a4 #8c8c8c #525252 #8c8c8c"></div>
<div class="a" style="left:1151.50px;top:1117.4px;width:117.40px;height:30.4px;border-radius:3px;background:#e6e6e6;box-shadow:0 1px 0 rgba(255,255,255,.18),inset 0 1px 1px rgba(0,0,0,.4)"></div>
<div class="t " style="top:1150.00px;font-size:9.6px;line-height:13px;color:#1c1c1c;font-weight:700;left:810.15px;width:800px;text-align:center;transform-origin:50% 50%;">90</div>
<div class="a" style="left:1274.70px;top:1113px;width:125.40px;height:51.2px;border-radius:4px;background:linear-gradient(#1c1c1c,#242424 45%,#353535);border:1px solid #1e1e1e"></div>
<div class="a" style="left:1278.80px;top:1117.4px;width:117.40px;height:30.4px;border-radius:3px;background:#ffffff;"></div>
<div class="t " style="top:1150.00px;font-size:9.6px;line-height:13px;color:#fff;font-weight:700;left:937.45px;width:800px;text-align:center;transform-origin:50% 50%;">100</div>
<div class="a" style="left:1649px;top:1113px;width:40px;height:15.5px;border-radius:4px 4px 0 0;background:linear-gradient(#a8a8a8,#8c8c8c);border:1px solid #aaa;border-bottom-color:#555"></div>
<div class="a" style="left:1649px;top:1128.5px;width:40px;height:35.7px;background:linear-gradient(#9a9a9a,#7c7c7c 60%,#6c6c6c);border:1px solid #9c9c9c;border-top-color:#b0b0b0"></div>
<div class="a" style="left:1663.2px;top:1114.6px;width:11.6px;height:11.6px;border-radius:50%;background:linear-gradient(#747474,#a4a4a4)"></div>
<svg style="position:absolute;left:1660px;top:1114px" width="18" height="12" viewBox="1660 1114 18 12" ><path d="M1665.4 1122.2h7.2l-3.6-3.7z" fill="#2a2a2a"/></svg>
<div class="a" style="left:1656px;top:1133.8px;width:25.3px;height:25.4px;border-radius:3.5px;border:2px solid #1e1e1e;background:linear-gradient(#b4b4b4,#a6a6a6 52%,#8c8c8c 54%,#969696)"></div>
<div class="a" style="left:1663.1px;top:1141.2px;width:11.2px;height:10.8px;background:linear-gradient(#262626,#1c1c1c 52%,#000 54%)"></div>
<div class="a" style="left:1690.30px;top:1113px;width:37.8px;height:25.3px;background:linear-gradient(#a6a6a6,#8e8e8e 40%,#707070);border:1px solid;border-color:#b0b0b0 #4c4c4c #505050 #9a9a9a"></div>
<div class="a" style="left:1700.80px;top:1117.2px;width:16.8px;height:16.8px;border-radius:50%;background:linear-gradient(#7c7c7c,#acacac)"></div>
<div class="a" style="left:1728.10px;top:1113px;width:37.8px;height:25.3px;background:linear-gradient(#a6a6a6,#8e8e8e 40%,#707070);border:1px solid;border-color:#b0b0b0 #4c4c4c #505050 #9a9a9a"></div>
<div class="a" style="left:1738.60px;top:1117.2px;width:16.8px;height:16.8px;border-radius:50%;background:linear-gradient(#7c7c7c,#acacac)"></div>
<div class="a" style="left:1765.90px;top:1113px;width:37.8px;height:25.3px;background:linear-gradient(#a6a6a6,#8e8e8e 40%,#707070);border:1px solid;border-color:#b0b0b0 #4c4c4c #505050 #9a9a9a"></div>
<div class="a" style="left:1776.40px;top:1117.2px;width:16.8px;height:16.8px;border-radius:50%;background:linear-gradient(#7c7c7c,#acacac)"></div>
<div class="a" style="left:1803.70px;top:1113px;width:37.8px;height:25.3px;background:linear-gradient(#a6a6a6,#8e8e8e 40%,#707070);border:1px solid;border-color:#b0b0b0 #4c4c4c #505050 #9a9a9a"></div>
<div class="a" style="left:1814.20px;top:1117.2px;width:16.8px;height:16.8px;border-radius:50%;background:linear-gradient(#7c7c7c,#acacac)"></div>
<div class="a" style="left:1841.50px;top:1113px;width:37.8px;height:25.3px;background:linear-gradient(#a6a6a6,#8e8e8e 40%,#707070);border:1px solid;border-color:#b0b0b0 #4c4c4c #505050 #9a9a9a"></div>
<div class="a" style="left:1852.00px;top:1117.2px;width:16.8px;height:16.8px;border-radius:50%;background:linear-gradient(#7c7c7c,#acacac)"></div>
<div class="a" style="left:1879.3px;top:1113px;width:38.7px;height:25.3px;background:linear-gradient(#404040,#2e2e2e);border:1px solid #3a3a3a"></div>
<div class="a" style="left:1890px;top:1117.2px;width:16.8px;height:16.8px;border-radius:50%;background:linear-gradient(#2a2a2a,#404040)"></div>
<svg style="position:absolute;left:1690px;top:1113px" width="190" height="26" viewBox="1690 1113 190 26" ><rect x="1706.1000000000001" y="1122.5" width="6.2" height="6.2" fill="#2a2a2a"/><path d="M1744.4 1121.5l6.8 4.1-6.8 4.1z" fill="#262626"/><text x="1784.80" y="1129.00" font-size="10.5" fill="#222" font-weight="700" text-anchor="middle" textLength="10.20" lengthAdjust="spacingAndGlyphs">[··]</text><text x="1822.60" y="1130.60" font-size="16.5" fill="#222" font-weight="700" text-anchor="middle" textLength="11.60" lengthAdjust="spacingAndGlyphs">∞</text><g fill="none" stroke="#262626" stroke-width="1.9"><path d="M1856.5 1124.6999999999998a4 4 0 0 1 7-1.6"/><path d="M1864.3000000000002 1126.5a4 4 0 0 1-7 1.6"/></g><path d="M1865.3000000000002 1120.6v4.3h-4.3z" fill="#262626"/><path d="M1855.5 1130.6v-4.3h4.3z" fill="#262626"/></svg>
<div class="a" style="left:1690.3px;top:1139.2px;width:113.5px;height:25px;border-radius:4px 0 0 0;background:linear-gradient(#a6a6a6,#8e8e8e 40%,#707070);border:1px solid;border-color:#b4b4b4 #4c4c4c #5a5a5a #a0a0a0"></div>
<div class="a" style="left:1803.8px;top:1139.2px;width:114.2px;height:25px;border-radius:0 4px 0 0;background:linear-gradient(#a6a6a6,#8e8e8e 40%,#707070);border:1px solid;border-color:#b4b4b4 #8a8a8a #5a5a5a #a0a0a0"></div>
<div class="a" style="left:1707.2px;top:1143.3px;width:16.8px;height:16.8px;border-radius:50%;background:linear-gradient(#7e7e7e,#b0b0b0)"></div>
<div class="a" style="left:1886.2px;top:1143.3px;width:16.8px;height:16.8px;border-radius:50%;background:linear-gradient(#7e7e7e,#b0b0b0)"></div>
<svg style="position:absolute;left:1705px;top:1142px" width="200" height="20" viewBox="1705 1142 200 20" ><g fill="none" stroke="#262626" stroke-width="1.5" stroke-linejoin="miter"><path d="M1715.4 1147.6l-3.6 4.1 3.6 4.1M1719.4 1147.6l-3.6 4.1 3.6 4.1"/><path d="M1891.6 1147.6l3.6 4.1-3.6 4.1M1895.6 1147.6l3.6 4.1-3.6 4.1"/></g></svg>
<div class="t " style="top:1139.00px;font-size:18.8px;line-height:25px;color:#222;left:1737.60px;transform-origin:0 50%;transform:scaleX(1.0193);text-shadow:0 0 .5px #222;">Back</div>
<div class="t " style="top:1139.00px;font-size:18.8px;line-height:25px;color:#222;left:1827.20px;transform-origin:0 50%;transform:scaleX(1.1279);text-shadow:0 0 .5px #222;">Next</div>
<div class="a" style="left:0;top:0;width:1px;height:1166px;background:#6a6a6a"></div>
<div class="a" style="left:1918.9px;top:0;width:1.1px;height:1166px;background:#6e6e6e"></div>
<div class="a" style="left:0;top:1164.2px;width:1920px;height:0.8px;background:#1c1c1c"></div>
<div class="a" style="left:0;top:1164.8px;width:1920px;height:1.2px;background:#707070"></div>
</section>
</main>
</div>
</body>
</html>
